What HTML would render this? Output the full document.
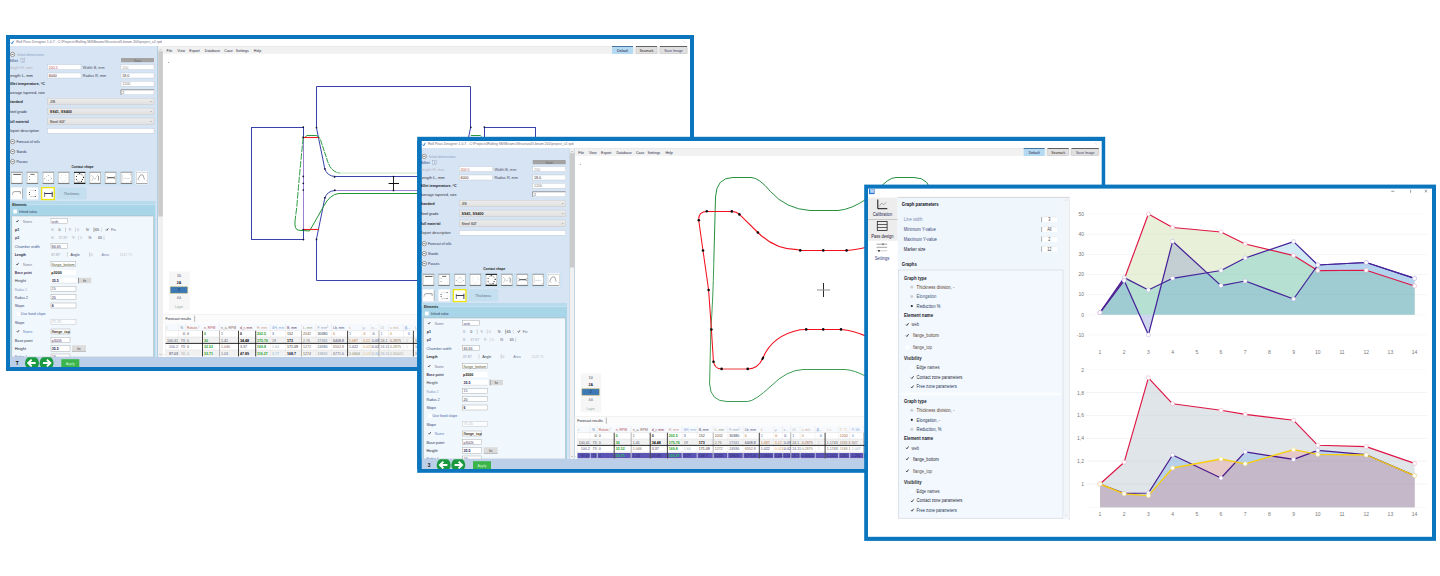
<!DOCTYPE html>
<html><head><meta charset="utf-8"><title>Roll pass design software</title>
<style>
html,body{margin:0;padding:0;background:#fff;}
body{width:1440px;height:576px;overflow:hidden;font-family:"Liberation Sans",sans-serif;}
svg{display:block;font-family:"Liberation Sans",sans-serif;}
</style></head><body>
<svg width="1440" height="576" viewBox="0 0 1440 576">
<defs><linearGradient id="cg" x1="0" y1="0" x2="0" y2="1"><stop offset="0" stop-color="#ededed"/><stop offset="1" stop-color="#e0e0e0"/></linearGradient><clipPath id="botclip"><rect x="10" y="357.2" width="680" height="9.8"/></clipPath><clipPath id="w2clip"><rect x="421" y="141" width="680" height="328"/></clipPath></defs>
<rect x="6.00" y="35.00" width="688.00" height="336.00" fill="#0b75be" />
<rect x="163.00" y="46.00" width="527.00" height="311.00" fill="#fff" />
<rect x="10.00" y="39.00" width="680.00" height="7.20" fill="#fff" />
<path d="M11 42.5 L12 43.8 L13.6 40.8" stroke="#1f6fd0" stroke-width="0.9" fill="none" />
<text font-size="3.53" fill="#3a3a55" x="16.30" y="43.44" opacity="0.75" textLength="145.5" lengthAdjust="spacing">Roll Pass Designer 1.0.7 - C:\Projects\Rolling Mill\Beams\Structural\I-beam 200\project_v2.rpd</text>
<line x1="683.00" y1="40.50" x2="685.50" y2="43.00" stroke="#bbb" stroke-width="0.4" />
<rect x="163.00" y="46.60" width="525.00" height="7.20" fill="#f1f1f1" />
<line x1="163.00" y1="46.40" x2="612.00" y2="46.40" stroke="#d4d4d4" stroke-width="0.5" />
<text font-size="4.17" fill="#2a2a45" transform="translate(166.60,51.66) scale(0.86,1)" >File</text>
<text font-size="4.17" fill="#2a2a45" transform="translate(177.30,51.66) scale(0.86,1)" >View</text>
<text font-size="4.17" fill="#2a2a45" transform="translate(189.30,51.66) scale(0.86,1)" >Export</text>
<text font-size="4.17" fill="#2a2a45" transform="translate(204.80,51.66) scale(0.86,1)" >Database</text>
<text font-size="4.17" fill="#2a2a45" transform="translate(224.30,51.66) scale(0.86,1)" >Case</text>
<text font-size="4.17" fill="#2a2a45" transform="translate(235.80,51.66) scale(0.86,1)" >Settings</text>
<text font-size="4.17" fill="#2a2a45" transform="translate(253.80,51.66) scale(0.86,1)" >Help</text>
<rect x="612.00" y="46.20" width="21.00" height="7.80" fill="#b4daf3" />
<line x1="612.00" y1="46.50" x2="633.00" y2="46.50" stroke="#2a5a8a" stroke-width="0.8" />
<text font-size="4.07" fill="#213" transform="translate(622.50,51.82) scale(0.86,1)" text-anchor="middle" >Default</text>
<rect x="636.00" y="46.20" width="21.00" height="7.40" fill="#e0e0e0" stroke="#b8b8b8" stroke-width="0.4" />
<line x1="636.00" y1="46.50" x2="657.00" y2="46.50" stroke="#444" stroke-width="0.8" />
<text font-size="4.07" fill="#322" transform="translate(646.50,51.82) scale(0.86,1)" text-anchor="middle" >Seamark</text>
<rect x="660.00" y="46.20" width="27.00" height="7.40" fill="#e0e0e0" stroke="#b8b8b8" stroke-width="0.4" />
<line x1="660.00" y1="46.50" x2="687.00" y2="46.50" stroke="#444" stroke-width="0.8" />
<text font-size="4.07" fill="#446" transform="translate(673.50,51.82) scale(0.86,1)" text-anchor="middle" >Save Image</text>
<circle cx="168.60" cy="62.40" r="0.45" fill="#333"/>
<rect x="169.00" y="271.60" width="20.60" height="38.60" fill="#f6f6f6" />
<text font-size="4.07" fill="#335" transform="translate(179.00,277.02) scale(0.86,1)" text-anchor="middle" >10</text>
<text font-size="4.07" fill="#223" transform="translate(179.00,284.22) scale(0.86,1)" font-weight="bold" text-anchor="middle" >2A</text>
<rect x="170.20" y="286.80" width="17.40" height="6.40" fill="#3c78b4" stroke="#c9b46a" stroke-width="0.5" />
<text font-size="4.07" fill="#123" transform="translate(179.00,291.42) scale(0.86,1)" text-anchor="middle" >2</text>
<text font-size="4.07" fill="#99a" transform="translate(179.00,298.62) scale(0.86,1)" text-anchor="middle" >AA</text>
<text font-size="3.85" fill="#9aa" transform="translate(179.00,308.35) scale(0.86,1)" text-anchor="middle" >Layer</text>
<line x1="163.00" y1="314.60" x2="690.00" y2="314.60" stroke="#e6e6e6" stroke-width="0.6" />
<rect x="163.00" y="315.00" width="527.00" height="8.40" fill="#fbfbfb" />
<text font-size="4.17" fill="#223" transform="translate(165.60,320.06) scale(0.86,1)" >Forecast results</text>
<line x1="194.60" y1="315.60" x2="194.60" y2="321.80" stroke="#777" stroke-width="0.5" />
<rect x="165.60" y="323.60" width="524.40" height="7.00" fill="#f6f9fd" />
<rect x="165.60" y="330.60" width="524.40" height="6.40" fill="#fff" />
<rect x="165.60" y="337.00" width="524.40" height="6.30" fill="#f1f1f1" />
<rect x="165.60" y="343.80" width="524.40" height="6.20" fill="#fff" />
<rect x="165.60" y="350.00" width="524.40" height="6.50" fill="#f1f1f1" />
<line x1="165.60" y1="323.60" x2="165.60" y2="356.50" stroke="#e2e2e2" stroke-width="0.4" />
<line x1="178.50" y1="323.60" x2="178.50" y2="356.50" stroke="#e2e2e2" stroke-width="0.4" />
<line x1="185.50" y1="323.60" x2="185.50" y2="356.50" stroke="#e2e2e2" stroke-width="0.4" />
<line x1="219.50" y1="323.60" x2="219.50" y2="356.50" stroke="#e2e2e2" stroke-width="0.4" />
<line x1="219.50" y1="330.60" x2="219.50" y2="356.50" stroke="#777" stroke-width="0.5" />
<line x1="270.50" y1="323.60" x2="270.50" y2="356.50" stroke="#e2e2e2" stroke-width="0.4" />
<line x1="285.50" y1="323.60" x2="285.50" y2="356.50" stroke="#e2e2e2" stroke-width="0.4" />
<line x1="301.50" y1="323.60" x2="301.50" y2="356.50" stroke="#e2e2e2" stroke-width="0.4" />
<line x1="301.50" y1="330.60" x2="301.50" y2="356.50" stroke="#777" stroke-width="0.5" />
<line x1="316.00" y1="323.60" x2="316.00" y2="356.50" stroke="#e2e2e2" stroke-width="0.4" />
<line x1="331.50" y1="323.60" x2="331.50" y2="356.50" stroke="#e2e2e2" stroke-width="0.4" />
<line x1="362.00" y1="323.60" x2="362.00" y2="356.50" stroke="#e2e2e2" stroke-width="0.4" />
<line x1="371.00" y1="323.60" x2="371.00" y2="356.50" stroke="#e2e2e2" stroke-width="0.4" />
<line x1="379.00" y1="323.60" x2="379.00" y2="356.50" stroke="#e2e2e2" stroke-width="0.4" />
<line x1="379.00" y1="330.60" x2="379.00" y2="356.50" stroke="#777" stroke-width="0.5" />
<line x1="388.50" y1="323.60" x2="388.50" y2="356.50" stroke="#e2e2e2" stroke-width="0.4" />
<line x1="403.50" y1="323.60" x2="403.50" y2="356.50" stroke="#e2e2e2" stroke-width="0.4" />
<line x1="427.00" y1="323.60" x2="427.00" y2="356.50" stroke="#e2e2e2" stroke-width="0.4" />
<line x1="438.00" y1="323.60" x2="438.00" y2="356.50" stroke="#e2e2e2" stroke-width="0.4" />
<line x1="452.00" y1="323.60" x2="452.00" y2="356.50" stroke="#e2e2e2" stroke-width="0.4" />
<line x1="452.00" y1="330.60" x2="452.00" y2="356.50" stroke="#777" stroke-width="0.5" />
<line x1="464.00" y1="323.60" x2="464.00" y2="356.50" stroke="#e2e2e2" stroke-width="0.4" />
<line x1="490.00" y1="323.60" x2="490.00" y2="356.50" stroke="#e2e2e2" stroke-width="0.4" />
<line x1="505.00" y1="323.60" x2="505.00" y2="356.50" stroke="#e2e2e2" stroke-width="0.4" />
<line x1="520.00" y1="323.60" x2="520.00" y2="356.50" stroke="#e2e2e2" stroke-width="0.4" />
<line x1="520.00" y1="330.60" x2="520.00" y2="356.50" stroke="#777" stroke-width="0.5" />
<line x1="535.00" y1="323.60" x2="535.00" y2="356.50" stroke="#e2e2e2" stroke-width="0.4" />
<line x1="565.00" y1="323.60" x2="565.00" y2="356.50" stroke="#e2e2e2" stroke-width="0.4" />
<line x1="580.00" y1="323.60" x2="580.00" y2="356.50" stroke="#e2e2e2" stroke-width="0.4" />
<line x1="600.00" y1="323.60" x2="600.00" y2="356.50" stroke="#e2e2e2" stroke-width="0.4" />
<line x1="600.00" y1="330.60" x2="600.00" y2="356.50" stroke="#777" stroke-width="0.5" />
<line x1="640.00" y1="323.60" x2="640.00" y2="356.50" stroke="#e2e2e2" stroke-width="0.4" />
<line x1="660.00" y1="323.60" x2="660.00" y2="356.50" stroke="#e2e2e2" stroke-width="0.4" />
<line x1="680.00" y1="323.60" x2="680.00" y2="356.50" stroke="#e2e2e2" stroke-width="0.4" />
<line x1="165.60" y1="330.60" x2="690.00" y2="330.60" stroke="#d5d5d5" stroke-width="0.4" />
<line x1="165.60" y1="337.00" x2="690.00" y2="337.00" stroke="#d5d5d5" stroke-width="0.4" />
<line x1="165.60" y1="350.00" x2="690.00" y2="350.00" stroke="#d5d5d5" stroke-width="0.4" />
<line x1="202.50" y1="330.80" x2="202.50" y2="356.40" stroke="#111" stroke-width="0.8" />
<line x1="238.50" y1="330.80" x2="238.50" y2="356.40" stroke="#111" stroke-width="0.8" />
<line x1="255.70" y1="330.80" x2="255.70" y2="356.40" stroke="#111" stroke-width="0.8" />
<line x1="347.60" y1="330.80" x2="347.60" y2="356.40" stroke="#111" stroke-width="0.8" />
<line x1="413.40" y1="330.80" x2="413.40" y2="356.40" stroke="#111" stroke-width="0.8" />
<line x1="476.00" y1="330.80" x2="476.00" y2="356.40" stroke="#111" stroke-width="0.8" />
<line x1="550.00" y1="330.80" x2="550.00" y2="356.40" stroke="#111" stroke-width="0.8" />
<line x1="620.00" y1="330.80" x2="620.00" y2="356.40" stroke="#111" stroke-width="0.8" />
<line x1="165.60" y1="343.40" x2="690.00" y2="343.40" stroke="#111" stroke-width="0.9" />
<text font-size="3.96" fill="#7ab" transform="translate(166.50,328.59) scale(0.86,1)" >i</text>
<text font-size="3.96" fill="#68a" transform="translate(180.50,328.59) scale(0.86,1)" >N</text>
<text font-size="3.96" fill="#b65" transform="translate(187.00,328.59) scale(0.86,1)" >Rotate,°</text>
<text font-size="3.96" fill="#b56" transform="translate(204.00,328.59) scale(0.86,1)" >n, RPM</text>
<text font-size="3.96" fill="#865" transform="translate(221.00,328.59) scale(0.86,1)" >n_a, RPM</text>
<text font-size="3.96" fill="#834" transform="translate(240.00,328.59) scale(0.86,1)" >d_r, mm</text>
<text font-size="3.96" fill="#c98" transform="translate(257.00,328.59) scale(0.86,1)" >H, mm</text>
<text font-size="3.96" fill="#8ad" transform="translate(272.00,328.59) scale(0.86,1)" >ΔH, mm</text>
<text font-size="3.96" fill="#546" transform="translate(287.00,328.59) scale(0.86,1)" >B, mm</text>
<text font-size="3.96" fill="#997" transform="translate(303.00,328.59) scale(0.86,1)" >L, mm</text>
<text font-size="3.96" fill="#9ab" transform="translate(317.50,328.59) scale(0.86,1)" >F, mm²</text>
<text font-size="3.96" fill="#558" transform="translate(333.00,328.59) scale(0.86,1)" >Lb, mm</text>
<text font-size="3.96" fill="#da8" transform="translate(349.00,328.59) scale(0.86,1)" >λ</text>
<text font-size="3.96" fill="#aab" transform="translate(363.00,328.59) scale(0.86,1)" >μ</text>
<text font-size="3.96" fill="#aab" transform="translate(372.00,328.59) scale(0.86,1)" >ε, -</text>
<text font-size="3.96" fill="#bbb" transform="translate(380.50,328.59) scale(0.86,1)" >λΣ</text>
<text font-size="3.96" fill="#ca8" transform="translate(390.00,328.59) scale(0.86,1)" >v, m/s</text>
<text font-size="3.96" fill="#47c" transform="translate(405.00,328.59) scale(0.86,1)" >β, -</text>
<text font-size="3.96" fill="#da8" transform="translate(415.00,328.59) scale(0.86,1)" >t, s</text>
<text font-size="3.96" fill="#db8" transform="translate(428.00,328.59) scale(0.86,1)" >T, °C</text>
<text font-size="3.96" fill="#8ad" transform="translate(440.00,328.59) scale(0.86,1)" >P, kN</text>
<text font-size="4.17" fill="#999" transform="translate(178.00,335.26) scale(0.86,1)" text-anchor="end" ></text>
<text font-size="4.17" fill="#333" transform="translate(184.80,335.26) scale(0.86,1)" text-anchor="end" >0</text>
<text font-size="4.17" fill="#444" transform="translate(187.00,335.26) scale(0.86,1)" >0</text>
<text font-size="4.17" fill="#1fa21f" transform="translate(204.00,335.26) scale(0.86,1)" font-weight="bold" >0</text>
<text font-size="4.17" fill="#555" transform="translate(221.00,335.26) scale(0.86,1)" >1</text>
<text font-size="4.17" fill="#111" transform="translate(240.00,335.26) scale(0.86,1)" font-weight="bold" >0</text>
<text font-size="4.17" fill="#1fa21f" transform="translate(257.00,335.26) scale(0.86,1)" font-weight="bold" >202.5</text>
<text font-size="4.17" fill="#35a" transform="translate(272.00,335.26) scale(0.86,1)" >3</text>
<text font-size="4.17" fill="#432" transform="translate(287.00,335.26) scale(0.86,1)" >152</text>
<text font-size="4.17" fill="#753" transform="translate(303.00,335.26) scale(0.86,1)" >2032</text>
<text font-size="4.17" fill="#235" transform="translate(317.50,335.26) scale(0.86,1)" >30380</text>
<text font-size="4.17" fill="#b73" transform="translate(333.00,335.26) scale(0.86,1)" >6</text>
<text font-size="4.17" fill="#47c" transform="translate(349.00,335.26) scale(0.86,1)" >1</text>
<text font-size="4.17" fill="#b62" transform="translate(363.50,335.26) scale(0.86,1)" >0</text>
<text font-size="4.17" fill="#238" transform="translate(372.50,335.26) scale(0.86,1)" >0</text>
<text font-size="4.17" fill="#47c" transform="translate(380.50,335.26) scale(0.86,1)" >1</text>
<text font-size="4.17" fill="#b83" transform="translate(390.00,335.26) scale(0.86,1)" >0</text>
<text font-size="4.17" fill="#36b" transform="translate(408.00,335.26) scale(0.86,1)" >0</text>
<text font-size="4.17" fill="#a63" transform="translate(428.00,335.26) scale(0.86,1)" >1200</text>
<text font-size="4.17" fill="#58c" transform="translate(440.00,335.26) scale(0.86,1)" >0</text>
<text font-size="4.17" fill="#556" transform="translate(178.00,341.66) scale(0.86,1)" text-anchor="end" >100.41</text>
<text font-size="4.17" fill="#557" transform="translate(184.80,341.66) scale(0.86,1)" text-anchor="end" >73</text>
<text font-size="4.17" fill="#666" transform="translate(187.00,341.66) scale(0.86,1)" >0</text>
<text font-size="4.17" fill="#1fa21f" transform="translate(204.00,341.66) scale(0.86,1)" font-weight="bold" >30</text>
<text font-size="4.17" fill="#446" transform="translate(221.00,341.66) scale(0.86,1)" >1.41</text>
<text font-size="4.17" fill="#000" transform="translate(240.00,341.66) scale(0.86,1)" font-weight="bold" >34.48</text>
<text font-size="4.17" fill="#1fa21f" transform="translate(257.00,341.66) scale(0.86,1)" font-weight="bold" >175.76</text>
<text font-size="4.17" fill="#667" transform="translate(272.00,341.66) scale(0.86,1)" >19</text>
<text font-size="4.17" fill="#211" transform="translate(287.00,341.66) scale(0.86,1)" font-weight="bold" >173</text>
<text font-size="4.17" fill="#876" transform="translate(303.00,341.66) scale(0.86,1)" >2.76</text>
<text font-size="4.17" fill="#679" transform="translate(317.50,341.66) scale(0.86,1)" >27341</text>
<text font-size="4.17" fill="#446" transform="translate(333.00,341.66) scale(0.86,1)" >6408.8</text>
<text font-size="4.17" fill="#b73" transform="translate(349.00,341.66) scale(0.86,1)" >1.087</text>
<text font-size="4.17" fill="#c84" transform="translate(363.00,341.66) scale(0.86,1)" >3.22</text>
<text font-size="4.17" fill="#458" transform="translate(372.00,341.66) scale(0.86,1)" >0.09</text>
<text font-size="4.17" fill="#666" transform="translate(380.50,341.66) scale(0.86,1)" >24.1</text>
<text font-size="4.17" fill="#964" transform="translate(390.00,341.66) scale(0.86,1)" >0.2875</text>
<text font-size="4.17" fill="#bbb" transform="translate(406.00,341.66) scale(0.86,1)" >1</text>
<text font-size="4.17" fill="#666" transform="translate(415.00,341.66) scale(0.86,1)" >1.1743</text>
<text font-size="4.17" fill="#975" transform="translate(428.00,341.66) scale(0.86,1)" >1192.5</text>
<text font-size="4.17" fill="#977" transform="translate(440.00,341.66) scale(0.86,1)" >847</text>
<text font-size="4.17" fill="#558" transform="translate(178.00,348.36) scale(0.86,1)" text-anchor="end" >100.2</text>
<text font-size="4.17" fill="#446" transform="translate(184.80,348.36) scale(0.86,1)" text-anchor="end" >73</text>
<text font-size="4.17" fill="#444" transform="translate(187.00,348.36) scale(0.86,1)" >0</text>
<text font-size="4.17" fill="#1fa21f" transform="translate(204.00,348.36) scale(0.86,1)" font-weight="bold" >32.52</text>
<text font-size="4.17" fill="#865" transform="translate(221.00,348.36) scale(0.86,1)" >1.046</text>
<text font-size="4.17" fill="#446" transform="translate(240.00,348.36) scale(0.86,1)" >3.37</text>
<text font-size="4.17" fill="#1fa21f" transform="translate(257.00,348.36) scale(0.86,1)" font-weight="bold" >169.8</text>
<text font-size="4.17" fill="#9ab" transform="translate(272.00,348.36) scale(0.86,1)" >1.64</text>
<text font-size="4.17" fill="#322" transform="translate(287.00,348.36) scale(0.86,1)" >171.09</text>
<text font-size="4.17" fill="#765" transform="translate(303.00,348.36) scale(0.86,1)" >1272</text>
<text font-size="4.17" fill="#457" transform="translate(317.50,348.36) scale(0.86,1)" >24590</text>
<text font-size="4.17" fill="#865" transform="translate(333.00,348.36) scale(0.86,1)" >6552.8</text>
<text font-size="4.17" fill="#446" transform="translate(349.00,348.36) scale(0.86,1)" >1.022</text>
<text font-size="4.17" fill="#c95" transform="translate(363.00,348.36) scale(0.86,1)" >0.021</text>
<text font-size="4.17" fill="#446" transform="translate(372.00,348.36) scale(0.86,1)" >0.02</text>
<text font-size="4.17" fill="#568" transform="translate(380.50,348.36) scale(0.86,1)" >24.11</text>
<text font-size="4.17" fill="#875" transform="translate(390.00,348.36) scale(0.86,1)" >0.2875</text>
<text font-size="4.17" fill="#ccc" transform="translate(406.00,348.36) scale(0.86,1)" >1</text>
<text font-size="4.17" fill="#555" transform="translate(415.00,348.36) scale(0.86,1)" >1.1743</text>
<text font-size="4.17" fill="#986" transform="translate(428.00,348.36) scale(0.86,1)" >1188.1</text>
<text font-size="4.17" fill="#9ab" transform="translate(440.00,348.36) scale(0.86,1)" >1.047</text>
<text font-size="4.17" fill="#335" transform="translate(178.00,354.76) scale(0.86,1)" text-anchor="end" >97.03</text>
<text font-size="4.17" fill="#99a" transform="translate(184.80,354.76) scale(0.86,1)" text-anchor="end" >74</text>
<text font-size="4.17" fill="#aaa" transform="translate(187.00,354.76) scale(0.86,1)" >0</text>
<text font-size="4.17" fill="#1fa21f" transform="translate(204.00,354.76) scale(0.86,1)" font-weight="bold" >33.71</text>
<text font-size="4.17" fill="#568" transform="translate(221.00,354.76) scale(0.86,1)" >1.03</text>
<text font-size="4.17" fill="#112" transform="translate(240.00,354.76) scale(0.86,1)" font-weight="bold" >47.89</text>
<text font-size="4.17" fill="#1fa21f" transform="translate(257.00,354.76) scale(0.86,1)" font-weight="bold" >116.27</text>
<text font-size="4.17" fill="#8bd" transform="translate(272.00,354.76) scale(0.86,1)" >3.77</text>
<text font-size="4.17" fill="#113" transform="translate(287.00,354.76) scale(0.86,1)" font-weight="bold" >168.7</text>
<text font-size="4.17" fill="#765" transform="translate(303.00,354.76) scale(0.86,1)" >1274</text>
<text font-size="4.17" fill="#89a" transform="translate(317.50,354.76) scale(0.86,1)" >19825</text>
<text font-size="4.17" fill="#668" transform="translate(333.00,354.76) scale(0.86,1)" >6771.6</text>
<text font-size="4.17" fill="#886" transform="translate(349.00,354.76) scale(0.86,1)" >1.0664</text>
<text font-size="4.17" fill="#dc9" transform="translate(363.00,354.76) scale(0.86,1)" >0.032</text>
<text font-size="4.17" fill="#8ac" transform="translate(372.00,354.76) scale(0.86,1)" >0.16</text>
<text font-size="4.17" fill="#9ab" transform="translate(380.50,354.76) scale(0.86,1)" >26.11</text>
<text font-size="4.17" fill="#aa9" transform="translate(390.00,354.76) scale(0.86,1)" >0.30022</text>
<text font-size="4.17" fill="#777" transform="translate(415.00,354.76) scale(0.86,1)" >1.2411</text>
<text font-size="4.17" fill="#986" transform="translate(428.00,354.76) scale(0.86,1)" >1180</text>
<text font-size="4.17" fill="#9ab" transform="translate(440.00,354.76) scale(0.86,1)" >1.281</text>
<path d="M163.5 354 L164.5 355.2" stroke="#999" stroke-width="0.4" fill="none" />
<rect x="10.00" y="46.00" width="147.50" height="311.00" fill="#d6e4f4" />
<rect x="157.50" y="46.00" width="5.50" height="311.00" fill="#f0f0f0" />
<rect x="158.20" y="51.20" width="4.70" height="165.30" fill="#cbcbcb" />
<path d="M159.2 50.3 L160.4 49 L161.6 50.3" stroke="#888" stroke-width="0.4" fill="none" />
<path d="M159.2 353.8 L160.4 355 L161.6 353.8" stroke="#888" stroke-width="0.4" fill="none" />
<circle cx="12.50" cy="54.40" r="2.15" fill="#fff" stroke="#444" stroke-width="0.5"/>
<line x1="11.40" y1="54.40" x2="13.60" y2="54.40" stroke="#222" stroke-width="0.6" />
<text font-size="4.28" fill="#8fa3c4" x="17.40" y="56.10" textLength="26.70" lengthAdjust="spacingAndGlyphs" >Initial dimensions</text>
<text font-size="4.28" fill="#2b4a8a" x="8.30" y="62.20" textLength="9.70" lengthAdjust="spacingAndGlyphs" >Billet</text>
<rect x="21.00" y="58.60" width="3.80" height="4.00" fill="#e6eefa" stroke="#8aa0c0" stroke-width="0.4" />
<text font-size="3.64" fill="#557" transform="translate(22.00,61.97) scale(0.86,1)" >1</text>
<rect x="121.00" y="58.00" width="33.00" height="4.20" fill="#a3a3a3" />
<text font-size="3.85" fill="#666" transform="translate(137.50,61.55) scale(0.86,1)" text-anchor="middle" >Save</text>
<text font-size="4.28" fill="#b4b4bc" x="8.00" y="68.70" textLength="24.70" lengthAdjust="spacingAndGlyphs" >Height H, mm</text>
<rect x="47.50" y="64.60" width="33.50" height="5.00" fill="#fff" stroke="#b9c3d3" stroke-width="0.4" />
<text font-size="4.28" fill="#b55" transform="translate(48.70,68.70) scale(0.86,1)" >200.5</text>
<text font-size="4.28" fill="#556" x="82.80" y="68.70" textLength="21.90" lengthAdjust="spacingAndGlyphs" >Width B, mm</text>
<rect x="121.00" y="64.60" width="33.00" height="5.00" fill="#fff" stroke="#b9c3d3" stroke-width="0.4" />
<text font-size="4.28" fill="#999" transform="translate(122.20,68.70) scale(0.86,1)" >150</text>
<text font-size="4.28" fill="#334" x="8.00" y="77.20" textLength="25.00" lengthAdjust="spacingAndGlyphs" >Length L, mm</text>
<rect x="47.50" y="73.00" width="33.50" height="5.00" fill="#fff" stroke="#b9c3d3" stroke-width="0.4" />
<text font-size="4.28" fill="#522" transform="translate(48.70,77.10) scale(0.86,1)" >6000</text>
<text font-size="4.28" fill="#445" x="82.80" y="77.20" textLength="23.20" lengthAdjust="spacingAndGlyphs" >Radius R, mm</text>
<rect x="121.00" y="73.00" width="33.00" height="5.00" fill="#fff" stroke="#b9c3d3" stroke-width="0.4" />
<text font-size="4.28" fill="#333" transform="translate(122.20,77.10) scale(0.86,1)" >18.0</text>
<text font-size="4.28" fill="#161a2a" x="8.00" y="85.30" textLength="36.80" lengthAdjust="spacingAndGlyphs" font-weight="bold" >Billet temperature, °C</text>
<rect x="121.00" y="81.20" width="33.00" height="5.00" fill="#fff" stroke="#b9c3d3" stroke-width="0.4" />
<text font-size="4.28" fill="#777" transform="translate(122.20,85.30) scale(0.86,1)" >1200</text>
<text font-size="4.28" fill="#334" x="8.00" y="94.10" textLength="36.80" lengthAdjust="spacingAndGlyphs" >Average tapered, rate</text>
<rect x="121.00" y="89.80" width="33.00" height="5.00" fill="#fff" stroke="#b9c3d3" stroke-width="0.4" />
<line x1="121.00" y1="89.80" x2="154.00" y2="89.80" stroke="#555" stroke-width="0.5" />
<line x1="121.00" y1="89.80" x2="121.00" y2="94.80" stroke="#555" stroke-width="0.5" />
<text font-size="4.28" fill="#555" transform="translate(122.20,93.90) scale(0.86,1)" >2</text>
<text font-size="4.28" fill="#222" x="8.00" y="103.10" textLength="14.90" lengthAdjust="spacingAndGlyphs" font-weight="bold" >Standard</text>
<rect x="47.5" y="98.2" width="106.5" height="6.6" fill="url(#cg)" stroke="#c2c2c2" stroke-width="0.4"/>
<text font-size="4.28" fill="#222" transform="translate(49.80,103.10) scale(0.86,1)" >JIS</text>
<path d="M150.2 101.10000000000001 L151 102.0 L151.8 101.10000000000001" stroke="#777" stroke-width="0.4" fill="none" />
<text font-size="4.28" fill="#223" x="8.00" y="113.10" textLength="18.75" lengthAdjust="spacingAndGlyphs" >Steel grade</text>
<rect x="47.5" y="108.1" width="106.5" height="6.6" fill="url(#cg)" stroke="#c2c2c2" stroke-width="0.4"/>
<text font-size="4.28" fill="#222" transform="translate(49.80,113.00) scale(0.86,1)" font-weight="bold" >SS41, SS400</text>
<path d="M150.2 111.0 L151 111.89999999999999 L151.8 111.0" stroke="#777" stroke-width="0.4" fill="none" />
<text font-size="4.28" fill="#223" x="8.00" y="123.10" textLength="20.80" lengthAdjust="spacingAndGlyphs" font-weight="bold" >Roll material</text>
<rect x="47.5" y="118" width="106.5" height="6.6" fill="url(#cg)" stroke="#c2c2c2" stroke-width="0.4"/>
<text font-size="4.28" fill="#222" transform="translate(49.80,122.90) scale(0.86,1)" >Steel 60Г</text>
<path d="M150.2 120.9 L151 121.8 L151.8 120.9" stroke="#777" stroke-width="0.4" fill="none" />
<text font-size="4.28" fill="#334" x="8.00" y="132.30" textLength="30.90" lengthAdjust="spacingAndGlyphs" >Report description</text>
<rect x="47.50" y="128.50" width="106.50" height="4.70" fill="#fff" stroke="#b9c3d3" stroke-width="0.4" />
<circle cx="12.60" cy="141.60" r="2.15" fill="#fff" stroke="#444" stroke-width="0.5"/>
<line x1="11.50" y1="141.60" x2="13.70" y2="141.60" stroke="#222" stroke-width="0.6" />
<text font-size="4.28" fill="#1f2f55" x="16.40" y="143.10" textLength="23.40" lengthAdjust="spacingAndGlyphs" >Forecast of rolls</text>
<circle cx="12.60" cy="151.60" r="2.15" fill="#fff" stroke="#444" stroke-width="0.5"/>
<line x1="11.50" y1="151.60" x2="13.70" y2="151.60" stroke="#222" stroke-width="0.6" />
<text font-size="4.28" fill="#1f2f55" x="16.40" y="153.10" textLength="10.20" lengthAdjust="spacingAndGlyphs" >Stands</text>
<circle cx="12.60" cy="161.60" r="2.15" fill="#fff" stroke="#444" stroke-width="0.5"/>
<line x1="11.50" y1="161.60" x2="13.70" y2="161.60" stroke="#222" stroke-width="0.6" />
<text font-size="4.28" fill="#1f2f55" x="16.40" y="163.10" textLength="11.40" lengthAdjust="spacingAndGlyphs" >Passes</text>
<text font-size="3.75" fill="#222" transform="translate(82.50,168.31) scale(0.86,1)" font-weight="bold" text-anchor="middle" >Contact shape</text>
<rect x="10.00" y="171.00" width="140.00" height="14.50" fill="#cbe2f2" />
<rect x="10.00" y="185.50" width="47.00" height="15.00" fill="#cbe2f2" />
<rect x="11.10" y="172.00" width="11.30" height="11.50" fill="#fff" />
<line x1="11.10" y1="172.30" x2="22.40" y2="172.30" stroke="#808080" stroke-width="0.8" />
<line x1="11.10" y1="183.40" x2="22.40" y2="183.40" stroke="#707070" stroke-width="1.0" />
<line x1="11.40" y1="172.00" x2="11.40" y2="183.60" stroke="#a8a8a8" stroke-width="0.6" />
<line x1="22.10" y1="172.00" x2="22.10" y2="183.60" stroke="#9c9c9c" stroke-width="0.6" />
<rect x="26.75" y="172.00" width="11.30" height="11.50" fill="#fff" />
<line x1="26.75" y1="172.30" x2="38.05" y2="172.30" stroke="#808080" stroke-width="0.8" />
<line x1="26.75" y1="183.40" x2="38.05" y2="183.40" stroke="#707070" stroke-width="1.0" />
<line x1="27.05" y1="172.00" x2="27.05" y2="183.60" stroke="#a8a8a8" stroke-width="0.6" />
<line x1="37.75" y1="172.00" x2="37.75" y2="183.60" stroke="#9c9c9c" stroke-width="0.6" />
<rect x="42.70" y="172.00" width="11.30" height="11.50" fill="#fff" />
<line x1="42.70" y1="172.30" x2="54.00" y2="172.30" stroke="#808080" stroke-width="0.8" />
<line x1="42.70" y1="183.40" x2="54.00" y2="183.40" stroke="#707070" stroke-width="1.0" />
<line x1="43.00" y1="172.00" x2="43.00" y2="183.60" stroke="#a8a8a8" stroke-width="0.6" />
<line x1="53.70" y1="172.00" x2="53.70" y2="183.60" stroke="#9c9c9c" stroke-width="0.6" />
<rect x="58.00" y="172.00" width="11.30" height="11.50" fill="#fff" />
<line x1="58.00" y1="172.30" x2="69.30" y2="172.30" stroke="#808080" stroke-width="0.8" />
<line x1="58.00" y1="183.40" x2="69.30" y2="183.40" stroke="#707070" stroke-width="1.0" />
<line x1="58.30" y1="172.00" x2="58.30" y2="183.60" stroke="#a8a8a8" stroke-width="0.6" />
<line x1="69.00" y1="172.00" x2="69.00" y2="183.60" stroke="#9c9c9c" stroke-width="0.6" />
<rect x="74.00" y="172.00" width="11.30" height="11.50" fill="#fff" />
<line x1="74.00" y1="172.30" x2="85.30" y2="172.30" stroke="#808080" stroke-width="0.8" />
<line x1="74.00" y1="183.40" x2="85.30" y2="183.40" stroke="#707070" stroke-width="1.0" />
<line x1="74.30" y1="172.00" x2="74.30" y2="183.60" stroke="#a8a8a8" stroke-width="0.6" />
<line x1="85.00" y1="172.00" x2="85.00" y2="183.60" stroke="#9c9c9c" stroke-width="0.6" />
<rect x="89.50" y="172.00" width="11.30" height="11.50" fill="#fff" />
<line x1="89.50" y1="172.30" x2="100.80" y2="172.30" stroke="#808080" stroke-width="0.8" />
<line x1="89.50" y1="183.40" x2="100.80" y2="183.40" stroke="#707070" stroke-width="1.0" />
<line x1="89.80" y1="172.00" x2="89.80" y2="183.60" stroke="#a8a8a8" stroke-width="0.6" />
<line x1="100.50" y1="172.00" x2="100.50" y2="183.60" stroke="#9c9c9c" stroke-width="0.6" />
<rect x="104.90" y="172.00" width="11.30" height="11.50" fill="#fff" />
<line x1="104.90" y1="172.30" x2="116.20" y2="172.30" stroke="#808080" stroke-width="0.8" />
<line x1="104.90" y1="183.40" x2="116.20" y2="183.40" stroke="#707070" stroke-width="1.0" />
<line x1="105.20" y1="172.00" x2="105.20" y2="183.60" stroke="#a8a8a8" stroke-width="0.6" />
<line x1="115.90" y1="172.00" x2="115.90" y2="183.60" stroke="#9c9c9c" stroke-width="0.6" />
<rect x="120.80" y="172.00" width="11.30" height="11.50" fill="#fff" />
<line x1="120.80" y1="172.30" x2="132.10" y2="172.30" stroke="#808080" stroke-width="0.8" />
<line x1="120.80" y1="183.40" x2="132.10" y2="183.40" stroke="#707070" stroke-width="1.0" />
<line x1="121.10" y1="172.00" x2="121.10" y2="183.60" stroke="#a8a8a8" stroke-width="0.6" />
<line x1="131.80" y1="172.00" x2="131.80" y2="183.60" stroke="#9c9c9c" stroke-width="0.6" />
<rect x="135.50" y="171.30" width="12.90" height="13.30" fill="#fff" />
<rect x="136.30" y="172.30" width="11.20" height="11.40" fill="#fff" stroke="#a8a8a8" stroke-width="0.4" />
<line x1="136.30" y1="183.60" x2="147.50" y2="183.60" stroke="#8a8a8a" stroke-width="0.7" />
<line x1="13.20" y1="174.40" x2="20.90" y2="174.40" stroke="#333" stroke-width="0.8" />
<line x1="30.40" y1="174.40" x2="34.60" y2="174.40" stroke="#333" stroke-width="0.7" />
<circle cx="29.40" cy="176.40" r="0.45" fill="#333"/>
<circle cx="29.40" cy="179.50" r="0.45" fill="#333"/>
<circle cx="35.60" cy="176.40" r="0.35" fill="#ccc"/>
<circle cx="35.60" cy="179.50" r="0.35" fill="#ccc"/>
<circle cx="35.20" cy="181.00" r="0.35" fill="#ccc"/>
<circle cx="48.30" cy="175.40" r="0.45" fill="#555"/>
<circle cx="44.60" cy="178.40" r="0.45" fill="#555"/>
<circle cx="51.60" cy="178.40" r="0.45" fill="#555"/>
<circle cx="48.30" cy="180.40" r="0.45" fill="#555"/>
<path d="M45.8 177.2 L47.2 176 M49.6 176 L50.8 177.2 M45.8 179.4 L47 180.2 M50.8 179.4 L49.6 180.2" stroke="#999" stroke-width="0.4" fill="none" />
<circle cx="61.30" cy="175.40" r="0.4" fill="#aaa"/>
<circle cx="65.70" cy="175.40" r="0.4" fill="#aaa"/>
<circle cx="60.40" cy="178.00" r="0.4" fill="#aaa"/>
<circle cx="66.70" cy="177.60" r="0.4" fill="#aaa"/>
<path d="M61.5 180 L63.2 181.5 M66 179.5 L64.2 181.5" stroke="#ccc" stroke-width="0.4" fill="none" />
<circle cx="76.40" cy="176.50" r="0.55" fill="#111"/>
<circle cx="76.40" cy="179.20" r="0.55" fill="#111"/>
<circle cx="83.50" cy="177.40" r="0.55" fill="#111"/>
<circle cx="82.40" cy="179.60" r="0.55" fill="#111"/>
<circle cx="81.40" cy="181.40" r="0.55" fill="#111"/>
<circle cx="79.60" cy="173.60" r="0.55" fill="#111"/>
<path d="M77.2 174.8 Q79.6 172.6 82 174.6 L83.4 176.6 M76.8 180.5 Q78 182.4 80.5 182" stroke="#555" stroke-width="0.4" fill="none" />
<line x1="74.00" y1="172.40" x2="85.30" y2="172.40" stroke="#222" stroke-width="1.0" />
<line x1="74.00" y1="183.30" x2="85.30" y2="183.30" stroke="#111" stroke-width="1.1" />
<path d="M91.5 175.3 L93.5 177.4 L92 180.4 M94 179 L96 178.4" stroke="#666" stroke-width="0.5" fill="none" stroke-dasharray="0.9 0.5"/>
<path d="M98.4 174.5 L96.4 176.7" stroke="#777" stroke-width="0.45" fill="none" />
<line x1="98.50" y1="176.00" x2="98.50" y2="180.60" stroke="#555" stroke-width="0.6" />
<path d="M107 176.3 L107.9 177.7 L107 179.2 M115 176.3 L114.1 177.7 L115 179.2" stroke="#444" stroke-width="0.55" fill="none" />
<line x1="107.80" y1="177.70" x2="114.20" y2="177.70" stroke="#444" stroke-width="1.0" />
<line x1="122.70" y1="174.50" x2="122.70" y2="181.00" stroke="#c8c8c8" stroke-width="0.5" />
<line x1="123.50" y1="178.40" x2="129.80" y2="178.40" stroke="#bbb" stroke-width="0.5" />
<circle cx="130.40" cy="174.20" r="0.4" fill="#555"/>
<circle cx="130.40" cy="181.40" r="0.4" fill="#555"/>
<path d="M140 175.5 L138 179.2 L139.2 180.6 M140 175.5 Q141 174.4 143 175 L144.5 179.6" stroke="#555" stroke-width="0.5" fill="none" />
<circle cx="146.50" cy="180.60" r="0.35" fill="#999"/>
<rect x="11.10" y="187.40" width="11.40" height="12.00" fill="#fff" />
<rect x="26.75" y="187.40" width="11.40" height="12.00" fill="#fff" />
<rect x="41.65" y="187.65" width="12.60" height="11.90" fill="#fff" stroke="#efe410" stroke-width="1.3" />
<path d="M12.6 193.6 Q12.8 191.6 14.4 191.6 H20.4 V194" stroke="#555" stroke-width="0.55" fill="none" />
<line x1="22.50" y1="188.30" x2="22.50" y2="198.70" stroke="#888" stroke-width="0.6" />
<circle cx="12.30" cy="194.20" r="0.4" fill="#555"/>
<line x1="29.50" y1="190.40" x2="35.00" y2="190.40" stroke="#c8c8c8" stroke-width="0.5" />
<line x1="29.80" y1="196.70" x2="35.00" y2="196.70" stroke="#999" stroke-width="0.5" />
<circle cx="35.40" cy="190.50" r="0.5" fill="#222"/>
<circle cx="35.40" cy="196.50" r="0.5" fill="#222"/>
<circle cx="29.40" cy="192.40" r="0.5" fill="#222"/>
<circle cx="29.40" cy="194.60" r="0.5" fill="#222"/>
<circle cx="35.50" cy="192.50" r="0.35" fill="#ccc"/>
<circle cx="35.50" cy="194.50" r="0.35" fill="#ccc"/>
<path d="M44.6 192 V197" stroke="#445" stroke-width="0.7" fill="none" />
<path d="M52.2 191.7 V197" stroke="#445" stroke-width="1.0" fill="none" />
<line x1="44.60" y1="193.50" x2="52.40" y2="193.50" stroke="#3a3f55" stroke-width="1.0" />
<rect x="57.00" y="187.20" width="29.60" height="12.30" fill="#c3dff0" />
<text font-size="4.07" fill="#5d6d80" transform="translate(71.50,195.02) scale(0.86,1)" text-anchor="middle" >Thickness</text>
<rect x="10.00" y="201.00" width="145.30" height="156.00" fill="#a9d5e8" />
<rect x="10.00" y="201.00" width="145.30" height="3.40" fill="#b7dbec" />
<text font-size="4.28" fill="#222" x="12.30" y="206.40" textLength="14.20" lengthAdjust="spacingAndGlyphs" font-weight="bold" >Elements</text>
<line x1="27.50" y1="204.70" x2="155.00" y2="204.70" stroke="#cfe8f3" stroke-width="0.7" />
<rect x="13.30" y="209.60" width="3.60" height="3.80" fill="#fff" />
<text font-size="4.28" fill="#2a3a5a" x="19.00" y="213.20" textLength="18.00" lengthAdjust="spacingAndGlyphs" >Infeed value</text>
<rect x="11.80" y="216.00" width="141.90" height="141.00" fill="#f0f7fd" stroke="#a9b0b8" stroke-width="0.5" />
<path d="M16.3 221.2 L17.1 222.1 L18.6 220.0" stroke="#111" stroke-width="0.65" fill="none" />
<text font-size="4.28" fill="#7a8191" x="23.10" y="223.10" textLength="8.90" lengthAdjust="spacingAndGlyphs" >Name</text>
<rect x="51.00" y="218.60" width="16.50" height="5.00" fill="#fff" stroke="#9a9a9a" stroke-width="0.4" />
<text font-size="4.17" fill="#558" transform="translate(51.80,222.66) scale(0.86,1)" >web</text>
<text font-size="4.28" fill="#223" transform="translate(15.00,231.30) scale(0.86,1)" font-weight="bold" >p1</text>
<text font-size="4.17" fill="#99a" transform="translate(51.00,231.26) scale(0.86,1)" >X:</text>
<text font-size="4.17" fill="#334" transform="translate(58.60,231.26) scale(0.86,1)" >0</text>
<line x1="65.50" y1="227.50" x2="65.50" y2="232.00" stroke="#999" stroke-width="0.4" />
<text font-size="4.17" fill="#889" transform="translate(68.50,231.26) scale(0.86,1)" >Y:</text>
<line x1="75.50" y1="227.50" x2="75.50" y2="232.00" stroke="#aaa" stroke-width="0.4" />
<text font-size="4.17" fill="#aab" transform="translate(77.00,231.26) scale(0.86,1)" >0</text>
<text font-size="4.17" fill="#556" transform="translate(86.00,231.26) scale(0.86,1)" >N:</text>
<line x1="94.00" y1="227.50" x2="94.00" y2="232.00" stroke="#555" stroke-width="0.5" />
<text font-size="4.17" fill="#333" transform="translate(95.00,231.26) scale(0.86,1)" >65</text>
<line x1="101.50" y1="227.50" x2="101.50" y2="232.00" stroke="#bbb" stroke-width="0.4" />
<path d="M106 229.5 L106.8 230.4 L108.3 228.3" stroke="#111" stroke-width="0.65" fill="none" />
<text font-size="4.17" fill="#667" transform="translate(111.00,231.26) scale(0.86,1)" >Fix</text>
<text font-size="4.28" fill="#446" transform="translate(15.00,239.40) scale(0.86,1)" font-weight="bold" >p2</text>
<text font-size="4.17" fill="#99a" transform="translate(51.00,239.36) scale(0.86,1)" >X:</text>
<text font-size="4.17" fill="#aab" transform="translate(58.60,239.36) scale(0.86,1)" >37.87</text>
<text font-size="4.17" fill="#889" transform="translate(72.00,239.36) scale(0.86,1)" >Y:</text>
<line x1="78.50" y1="235.50" x2="78.50" y2="240.00" stroke="#bbb" stroke-width="0.4" />
<text font-size="4.17" fill="#bbc" transform="translate(80.00,239.36) scale(0.86,1)" >0</text>
<text font-size="4.17" fill="#667" transform="translate(88.50,239.36) scale(0.86,1)" >N:</text>
<text font-size="4.17" fill="#445" transform="translate(98.00,239.36) scale(0.86,1)" >65</text>
<line x1="104.00" y1="235.50" x2="104.00" y2="240.00" stroke="#aaa" stroke-width="0.4" />
<text font-size="4.28" fill="#46598a" x="14.80" y="247.90" textLength="25.00" lengthAdjust="spacingAndGlyphs" >Chamber width</text>
<rect x="51.00" y="243.60" width="16.50" height="5.00" fill="#fff" stroke="#9a9a9a" stroke-width="0.4" />
<text font-size="4.17" fill="#335" transform="translate(51.80,247.66) scale(0.86,1)" >84.65</text>
<text font-size="4.28" fill="#223" x="14.80" y="256.00" textLength="11.00" lengthAdjust="spacingAndGlyphs" font-weight="bold" >Length</text>
<text font-size="4.17" fill="#99a" transform="translate(51.00,255.96) scale(0.86,1)" >37.87</text>
<line x1="67.30" y1="252.00" x2="67.30" y2="256.80" stroke="#aaa" stroke-width="0.4" />
<text font-size="4.17" fill="#445" transform="translate(70.50,255.96) scale(0.86,1)" >Angle</text>
<line x1="89.50" y1="252.00" x2="89.50" y2="256.80" stroke="#999" stroke-width="0.4" />
<text font-size="4.17" fill="#aab" transform="translate(90.60,255.96) scale(0.86,1)" >0</text>
<text font-size="4.17" fill="#7a86a8" transform="translate(101.50,255.96) scale(0.86,1)" >Area</text>
<text font-size="4.17" fill="#c3c8d0" transform="translate(119.50,255.96) scale(0.86,1)" >1147.71</text>
<path d="M16.3 264.1 L17.1 265.0 L18.6 262.90000000000003" stroke="#111" stroke-width="0.65" fill="none" />
<text font-size="4.28" fill="#7a8191" x="23.10" y="266.00" textLength="8.90" lengthAdjust="spacingAndGlyphs" >Name</text>
<rect x="51.00" y="261.60" width="24.80" height="5.00" fill="#fff" stroke="#9a9a9a" stroke-width="0.4" />
<text font-size="4.17" fill="#553" transform="translate(51.80,265.66) scale(0.86,1)" >flange_bottom</text>
<text font-size="4.28" fill="#4a3a5a" x="14.80" y="274.10" textLength="17.20" lengthAdjust="spacingAndGlyphs" font-weight="bold" >Base point</text>
<rect x="51.00" y="270.00" width="24.80" height="5.00" fill="#fff" />
<text font-size="4.28" fill="#111" transform="translate(51.30,274.10) scale(0.86,1)" font-weight="bold" >p3000</text>
<text font-size="4.28" fill="#334" x="14.80" y="282.10" textLength="11.20" lengthAdjust="spacingAndGlyphs" >Height</text>
<rect x="51.00" y="278.00" width="25.40" height="5.20" fill="#fff" />
<line x1="51.00" y1="283.20" x2="76.40" y2="283.20" stroke="#c5c5c5" stroke-width="0.4" />
<text font-size="4.17" fill="#225" transform="translate(51.80,282.16) scale(0.86,1)" font-weight="bold" >35.5</text>
<rect x="78.50" y="277.80" width="12.80" height="5.40" fill="#d9d9d9" />
<line x1="78.50" y1="277.60" x2="78.50" y2="283.40" stroke="#666" stroke-width="0.6" />
<text font-size="3.85" fill="#444" transform="translate(84.60,281.75) scale(0.86,1)" text-anchor="middle" >fix</text>
<text font-size="4.28" fill="#7f93bd" x="14.80" y="290.50" textLength="12.10" lengthAdjust="spacingAndGlyphs" >Radius 1</text>
<rect x="51.00" y="286.40" width="25.00" height="5.00" fill="#fff" stroke="#9a9a9a" stroke-width="0.4" />
<text font-size="4.17" fill="#557" transform="translate(51.80,290.46) scale(0.86,1)" >15</text>
<text font-size="4.28" fill="#30406a" x="14.80" y="298.90" textLength="13.00" lengthAdjust="spacingAndGlyphs" >Radius 2</text>
<rect x="51.00" y="294.80" width="25.00" height="5.00" fill="#fff" stroke="#9a9a9a" stroke-width="0.4" />
<text font-size="4.17" fill="#224" transform="translate(51.80,298.86) scale(0.86,1)" >20</text>
<text font-size="4.28" fill="#30406a" x="14.80" y="307.20" textLength="9.50" lengthAdjust="spacingAndGlyphs" >Slope</text>
<rect x="51.00" y="303.00" width="25.00" height="5.00" fill="#fff" stroke="#9a9a9a" stroke-width="0.4" />
<text font-size="4.17" fill="#224" transform="translate(51.80,307.06) scale(0.86,1)" font-weight="bold" >6</text>
<rect x="16.60" y="312.00" width="3.50" height="3.80" fill="#fff" />
<text font-size="3.75" fill="#4a62a8" x="20.80" y="315.31" textLength="24.70" lengthAdjust="spacingAndGlyphs" >Use fixed slope</text>
<text font-size="4.28" fill="#30406a" x="14.80" y="323.50" textLength="9.50" lengthAdjust="spacingAndGlyphs" >Slope</text>
<rect x="51.00" y="319.40" width="25.00" height="5.00" fill="#fafcff" stroke="#bbb" stroke-width="0.4" />
<text font-size="4.17" fill="#b5bac5" transform="translate(52.00,323.46) scale(0.86,1)" >71.15</text>
<path d="M16.8 331.3 L17.6 332.2 L19.1 330.1" stroke="#111" stroke-width="0.65" fill="none" />
<text font-size="4.28" fill="#6b86c5" x="23.10" y="333.20" textLength="9.40" lengthAdjust="spacingAndGlyphs" >Name</text>
<rect x="51.00" y="329.00" width="19.00" height="5.00" fill="#fff" stroke="#9a9a9a" stroke-width="0.4" />
<text font-size="4.17" fill="#432" transform="translate(51.80,333.06) scale(0.86,1)" font-weight="bold" >flange_top</text>
<text font-size="4.28" fill="#2a3555" x="14.80" y="341.60" textLength="17.70" lengthAdjust="spacingAndGlyphs" >Base point</text>
<rect x="51.00" y="337.40" width="19.00" height="5.40" fill="#fff" stroke="#9a9a9a" stroke-width="0.4" />
<text font-size="4.17" fill="#536" transform="translate(51.80,341.66) scale(0.86,1)" >p3005</text>
<text font-size="4.28" fill="#223" x="14.80" y="350.20" textLength="11.20" lengthAdjust="spacingAndGlyphs" >Height</text>
<rect x="51.00" y="345.60" width="19.00" height="5.80" fill="#fff" stroke="#9a9a9a" stroke-width="0.4" />
<text font-size="4.17" fill="#225" transform="translate(51.80,350.06) scale(0.86,1)" font-weight="bold" >35.5</text>
<rect x="72.00" y="345.20" width="14.00" height="6.20" fill="#dcdcdc" />
<line x1="72.00" y1="351.40" x2="86.00" y2="351.40" stroke="#999" stroke-width="0.6" />
<text font-size="3.85" fill="#444" transform="translate(79.00,349.75) scale(0.86,1)" text-anchor="middle" >fix</text>
<text font-size="4.28" fill="#6a7cb0" x="14.80" y="357.70" textLength="12.10" lengthAdjust="spacingAndGlyphs" >Radius 1</text>
<rect x="51.00" y="354.00" width="19.00" height="3.00" fill="#fff" stroke="#9a9a9a" stroke-width="0.4" />
<text font-size="4.17" fill="#557" transform="translate(52.00,357.76) scale(0.86,1)" >15</text>
<rect x="10.00" y="357.00" width="680.00" height="10.00" fill="#bccfe9" />
<text font-size="5.56" fill="#111" transform="translate(17.30,364.95) scale(0.86,1)" font-weight="bold" text-anchor="middle" >T</text>
<g clip-path="url(#botclip)">
<circle cx="32.00" cy="363.00" r="7" fill="#1a9a3e"/>
<path d="M35.7 363 H29.4" stroke="#fff" stroke-width="2.0" fill="none" />
<path d="M31.7 359.6 L28.2 363 L31.7 366.4" stroke="#fff" stroke-width="1.9" fill="none" stroke-linejoin="miter"/>
<circle cx="46.60" cy="363.00" r="7" fill="#1a9a3e"/>
<path d="M42.9 363 H49.2" stroke="#fff" stroke-width="2.0" fill="none" />
<path d="M46.9 359.6 L50.4 363 L46.9 366.4" stroke="#fff" stroke-width="1.9" fill="none" stroke-linejoin="miter"/>
</g>
<rect x="61.30" y="359.20" width="18.00" height="7.80" fill="#3bb54a" />
<text font-size="4.17" fill="#d8f3da" transform="translate(70.30,364.76) scale(0.86,1)" text-anchor="middle" >Apply</text>
<path d="M316.5 128 V86.5 H470.5 V128" stroke="#3842aa" stroke-width="1" fill="none" />
<path d="M316.5 128 L324.6 167.8 Q326.6 176.5 336 176.5 H451 Q460.4 176.5 462.4 167.8 L470.5 128" stroke="#3842aa" stroke-width="1" fill="none" />
<path d="M316.5 239 V280.5 H470.5 V239" stroke="#3842aa" stroke-width="1" fill="none" />
<path d="M316.5 239 L324.6 199.2 Q326.6 190.5 336 190.5 H451 Q460.4 190.5 462.4 199.2 L470.5 239" stroke="#3842aa" stroke-width="1" fill="none" />
<line x1="336.00" y1="190.50" x2="451.00" y2="190.50" stroke="#a884d4" stroke-width="1" />
<rect x="251.50" y="127.50" width="52.00" height="112.00" fill="none" stroke="#3842aa" stroke-width="1" />
<rect x="484.50" y="127.50" width="51.00" height="112.00" fill="none" stroke="#3842aa" stroke-width="1" />
<line x1="303.50" y1="138.00" x2="303.50" y2="229.00" stroke="#9a7fd0" stroke-width="1" />
<path d="M304.8 137.3 L307 135.5 H316" stroke="#1f9636" stroke-width="0.95" fill="none" />
<path d="M316 135.5 Q319 135.5 320.6 140 L327.2 160 Q331 172.6 340 173" stroke="#1f9636" stroke-width="0.95" fill="none" stroke-dasharray="5.5 0.9"/>
<line x1="338.00" y1="173.00" x2="449.00" y2="173.00" stroke="#c4e8c4" stroke-width="1.1" />
<path d="M470.8 135.5 H480.3 L481.5 136.6" stroke="#1f9636" stroke-width="0.95" fill="none" />
<path d="M303.2 138 Q299.8 170 296.8 207 L295 221" stroke="#1f9636" stroke-width="0.95" fill="none" stroke-dasharray="6.5 1.3"/>
<path d="M295 221 Q294.3 229.6 298.5 230.2 L309.5 231 L323.5 206.5 Q330 194 339 193.5 H449" stroke="#1f9636" stroke-width="1.0" fill="none" />
<line x1="303.50" y1="137.50" x2="318.40" y2="137.50" stroke="#f01c24" stroke-width="1.1" />
<line x1="303.50" y1="229.50" x2="319.00" y2="229.50" stroke="#f01c24" stroke-width="1.1" />
<circle cx="303.30" cy="127.20" r="0.85" fill="#101030"/>
<circle cx="303.10" cy="137.40" r="0.85" fill="#101030"/>
<circle cx="303.30" cy="176.40" r="0.85" fill="#101030"/>
<circle cx="303.30" cy="183.30" r="0.85" fill="#101030"/>
<circle cx="303.30" cy="190.00" r="0.85" fill="#101030"/>
<circle cx="303.20" cy="229.60" r="0.85" fill="#101030"/>
<circle cx="324.80" cy="168.80" r="0.85" fill="#101030"/>
<circle cx="334.60" cy="176.90" r="0.85" fill="#101030"/>
<circle cx="324.80" cy="197.80" r="0.85" fill="#101030"/>
<circle cx="334.80" cy="190.20" r="0.85" fill="#101030"/>
<circle cx="393.50" cy="176.60" r="0.85" fill="#101030"/>
<circle cx="393.50" cy="190.40" r="0.85" fill="#101030"/>
<circle cx="316.50" cy="127.60" r="0.85" fill="#101030"/>
<circle cx="303.50" cy="239.60" r="0.85" fill="#101030"/>
<circle cx="316.50" cy="239.40" r="0.85" fill="#101030"/>
<circle cx="470.80" cy="127.30" r="0.85" fill="#101030"/>
<circle cx="484.30" cy="127.00" r="0.85" fill="#101030"/>
<line x1="393.50" y1="176.50" x2="393.50" y2="190.50" stroke="#111" stroke-width="0.9" />
<line x1="388.60" y1="183.50" x2="399.00" y2="183.50" stroke="#111" stroke-width="1.0" />
<rect x="6.00" y="39.00" width="4.00" height="328.00" fill="#0b75be" />
<rect x="417.20" y="136.80" width="688.00" height="336.00" fill="#0b75be" />
<g transform="translate(411.7,102)">
<rect x="163.00" y="46.00" width="527.00" height="311.00" fill="#fff" />
<rect x="10.00" y="39.00" width="680.00" height="7.20" fill="#fff" />
<path d="M11 42.5 L12 43.8 L13.6 40.8" stroke="#1f6fd0" stroke-width="0.9" fill="none" />
<text font-size="3.53" fill="#3a3a55" x="16.30" y="43.44" opacity="0.75" textLength="145.5" lengthAdjust="spacing">Roll Pass Designer 1.0.7 - C:\Projects\Rolling Mill\Beams\Structural\I-beam 200\project_v2.rpd</text>
<line x1="683.00" y1="40.50" x2="685.50" y2="43.00" stroke="#bbb" stroke-width="0.4" />
<rect x="163.00" y="46.60" width="525.00" height="7.20" fill="#f1f1f1" />
<line x1="163.00" y1="46.40" x2="612.00" y2="46.40" stroke="#d4d4d4" stroke-width="0.5" />
<text font-size="4.17" fill="#2a2a45" transform="translate(166.60,51.66) scale(0.86,1)" >File</text>
<text font-size="4.17" fill="#2a2a45" transform="translate(177.30,51.66) scale(0.86,1)" >View</text>
<text font-size="4.17" fill="#2a2a45" transform="translate(189.30,51.66) scale(0.86,1)" >Export</text>
<text font-size="4.17" fill="#2a2a45" transform="translate(204.80,51.66) scale(0.86,1)" >Database</text>
<text font-size="4.17" fill="#2a2a45" transform="translate(224.30,51.66) scale(0.86,1)" >Case</text>
<text font-size="4.17" fill="#2a2a45" transform="translate(235.80,51.66) scale(0.86,1)" >Settings</text>
<text font-size="4.17" fill="#2a2a45" transform="translate(253.80,51.66) scale(0.86,1)" >Help</text>
<rect x="612.00" y="46.20" width="21.00" height="7.80" fill="#b4daf3" />
<line x1="612.00" y1="46.50" x2="633.00" y2="46.50" stroke="#2a5a8a" stroke-width="0.8" />
<text font-size="4.07" fill="#213" transform="translate(622.50,51.82) scale(0.86,1)" text-anchor="middle" >Default</text>
<rect x="636.00" y="46.20" width="21.00" height="7.40" fill="#e0e0e0" stroke="#b8b8b8" stroke-width="0.4" />
<line x1="636.00" y1="46.50" x2="657.00" y2="46.50" stroke="#444" stroke-width="0.8" />
<text font-size="4.07" fill="#322" transform="translate(646.50,51.82) scale(0.86,1)" text-anchor="middle" >Seamark</text>
<rect x="660.00" y="46.20" width="27.00" height="7.40" fill="#e0e0e0" stroke="#b8b8b8" stroke-width="0.4" />
<line x1="660.00" y1="46.50" x2="687.00" y2="46.50" stroke="#444" stroke-width="0.8" />
<text font-size="4.07" fill="#446" transform="translate(673.50,51.82) scale(0.86,1)" text-anchor="middle" >Save Image</text>
<circle cx="168.60" cy="62.40" r="0.45" fill="#333"/>
<rect x="169.00" y="271.60" width="20.60" height="38.60" fill="#f6f6f6" />
<text font-size="4.07" fill="#335" transform="translate(179.00,277.02) scale(0.86,1)" text-anchor="middle" >10</text>
<text font-size="4.07" fill="#223" transform="translate(179.00,284.22) scale(0.86,1)" font-weight="bold" text-anchor="middle" >2A</text>
<rect x="170.20" y="286.80" width="17.40" height="6.40" fill="#3c78b4" stroke="#c9b46a" stroke-width="0.5" />
<text font-size="4.07" fill="#123" transform="translate(179.00,291.42) scale(0.86,1)" text-anchor="middle" >2</text>
<text font-size="4.07" fill="#99a" transform="translate(179.00,298.62) scale(0.86,1)" text-anchor="middle" >AA</text>
<text font-size="3.85" fill="#9aa" transform="translate(179.00,308.35) scale(0.86,1)" text-anchor="middle" >Layer</text>
<line x1="163.00" y1="314.60" x2="690.00" y2="314.60" stroke="#e6e6e6" stroke-width="0.6" />
<rect x="163.00" y="315.00" width="527.00" height="8.40" fill="#fbfbfb" />
<text font-size="4.17" fill="#223" transform="translate(165.60,320.06) scale(0.86,1)" >Forecast results</text>
<line x1="194.60" y1="315.60" x2="194.60" y2="321.80" stroke="#777" stroke-width="0.5" />
<rect x="165.60" y="323.60" width="524.40" height="7.00" fill="#f6f9fd" />
<rect x="165.60" y="330.60" width="524.40" height="6.40" fill="#fff" />
<rect x="165.60" y="337.00" width="524.40" height="6.30" fill="#f1f1f1" />
<rect x="165.60" y="343.80" width="524.40" height="6.20" fill="#fff" />
<rect x="165.60" y="350.00" width="524.40" height="6.50" fill="#f1f1f1" />
<rect x="165.60" y="351.00" width="524.40" height="5.30" fill="#5a55b4" />
<line x1="165.60" y1="323.60" x2="165.60" y2="356.50" stroke="#e2e2e2" stroke-width="0.4" />
<line x1="178.50" y1="323.60" x2="178.50" y2="356.50" stroke="#e2e2e2" stroke-width="0.4" />
<line x1="185.50" y1="323.60" x2="185.50" y2="356.50" stroke="#e2e2e2" stroke-width="0.4" />
<line x1="219.50" y1="323.60" x2="219.50" y2="356.50" stroke="#e2e2e2" stroke-width="0.4" />
<line x1="219.50" y1="330.60" x2="219.50" y2="356.50" stroke="#777" stroke-width="0.5" />
<line x1="270.50" y1="323.60" x2="270.50" y2="356.50" stroke="#e2e2e2" stroke-width="0.4" />
<line x1="285.50" y1="323.60" x2="285.50" y2="356.50" stroke="#e2e2e2" stroke-width="0.4" />
<line x1="301.50" y1="323.60" x2="301.50" y2="356.50" stroke="#e2e2e2" stroke-width="0.4" />
<line x1="301.50" y1="330.60" x2="301.50" y2="356.50" stroke="#777" stroke-width="0.5" />
<line x1="316.00" y1="323.60" x2="316.00" y2="356.50" stroke="#e2e2e2" stroke-width="0.4" />
<line x1="331.50" y1="323.60" x2="331.50" y2="356.50" stroke="#e2e2e2" stroke-width="0.4" />
<line x1="362.00" y1="323.60" x2="362.00" y2="356.50" stroke="#e2e2e2" stroke-width="0.4" />
<line x1="371.00" y1="323.60" x2="371.00" y2="356.50" stroke="#e2e2e2" stroke-width="0.4" />
<line x1="379.00" y1="323.60" x2="379.00" y2="356.50" stroke="#e2e2e2" stroke-width="0.4" />
<line x1="379.00" y1="330.60" x2="379.00" y2="356.50" stroke="#777" stroke-width="0.5" />
<line x1="388.50" y1="323.60" x2="388.50" y2="356.50" stroke="#e2e2e2" stroke-width="0.4" />
<line x1="403.50" y1="323.60" x2="403.50" y2="356.50" stroke="#e2e2e2" stroke-width="0.4" />
<line x1="427.00" y1="323.60" x2="427.00" y2="356.50" stroke="#e2e2e2" stroke-width="0.4" />
<line x1="438.00" y1="323.60" x2="438.00" y2="356.50" stroke="#e2e2e2" stroke-width="0.4" />
<line x1="452.00" y1="323.60" x2="452.00" y2="356.50" stroke="#e2e2e2" stroke-width="0.4" />
<line x1="452.00" y1="330.60" x2="452.00" y2="356.50" stroke="#777" stroke-width="0.5" />
<line x1="464.00" y1="323.60" x2="464.00" y2="356.50" stroke="#e2e2e2" stroke-width="0.4" />
<line x1="490.00" y1="323.60" x2="490.00" y2="356.50" stroke="#e2e2e2" stroke-width="0.4" />
<line x1="505.00" y1="323.60" x2="505.00" y2="356.50" stroke="#e2e2e2" stroke-width="0.4" />
<line x1="520.00" y1="323.60" x2="520.00" y2="356.50" stroke="#e2e2e2" stroke-width="0.4" />
<line x1="520.00" y1="330.60" x2="520.00" y2="356.50" stroke="#777" stroke-width="0.5" />
<line x1="535.00" y1="323.60" x2="535.00" y2="356.50" stroke="#e2e2e2" stroke-width="0.4" />
<line x1="565.00" y1="323.60" x2="565.00" y2="356.50" stroke="#e2e2e2" stroke-width="0.4" />
<line x1="580.00" y1="323.60" x2="580.00" y2="356.50" stroke="#e2e2e2" stroke-width="0.4" />
<line x1="600.00" y1="323.60" x2="600.00" y2="356.50" stroke="#e2e2e2" stroke-width="0.4" />
<line x1="600.00" y1="330.60" x2="600.00" y2="356.50" stroke="#777" stroke-width="0.5" />
<line x1="640.00" y1="323.60" x2="640.00" y2="356.50" stroke="#e2e2e2" stroke-width="0.4" />
<line x1="660.00" y1="323.60" x2="660.00" y2="356.50" stroke="#e2e2e2" stroke-width="0.4" />
<line x1="680.00" y1="323.60" x2="680.00" y2="356.50" stroke="#e2e2e2" stroke-width="0.4" />
<line x1="165.60" y1="330.60" x2="690.00" y2="330.60" stroke="#d5d5d5" stroke-width="0.4" />
<line x1="165.60" y1="337.00" x2="690.00" y2="337.00" stroke="#d5d5d5" stroke-width="0.4" />
<line x1="165.60" y1="350.00" x2="690.00" y2="350.00" stroke="#d5d5d5" stroke-width="0.4" />
<line x1="178.50" y1="351.00" x2="178.50" y2="356.30" stroke="#cfcfee" stroke-width="0.7" />
<line x1="185.50" y1="351.00" x2="185.50" y2="356.30" stroke="#cfcfee" stroke-width="0.7" />
<line x1="202.50" y1="351.00" x2="202.50" y2="356.30" stroke="#cfcfee" stroke-width="0.7" />
<line x1="219.50" y1="351.00" x2="219.50" y2="356.30" stroke="#cfcfee" stroke-width="0.7" />
<line x1="238.50" y1="351.00" x2="238.50" y2="356.30" stroke="#cfcfee" stroke-width="0.7" />
<line x1="255.70" y1="351.00" x2="255.70" y2="356.30" stroke="#cfcfee" stroke-width="0.7" />
<line x1="270.50" y1="351.00" x2="270.50" y2="356.30" stroke="#cfcfee" stroke-width="0.7" />
<line x1="285.50" y1="351.00" x2="285.50" y2="356.30" stroke="#cfcfee" stroke-width="0.7" />
<line x1="301.50" y1="351.00" x2="301.50" y2="356.30" stroke="#cfcfee" stroke-width="0.7" />
<line x1="316.00" y1="351.00" x2="316.00" y2="356.30" stroke="#cfcfee" stroke-width="0.7" />
<line x1="331.50" y1="351.00" x2="331.50" y2="356.30" stroke="#cfcfee" stroke-width="0.7" />
<line x1="347.60" y1="351.00" x2="347.60" y2="356.30" stroke="#cfcfee" stroke-width="0.7" />
<line x1="362.00" y1="351.00" x2="362.00" y2="356.30" stroke="#cfcfee" stroke-width="0.7" />
<line x1="371.00" y1="351.00" x2="371.00" y2="356.30" stroke="#cfcfee" stroke-width="0.7" />
<line x1="379.00" y1="351.00" x2="379.00" y2="356.30" stroke="#cfcfee" stroke-width="0.7" />
<line x1="388.50" y1="351.00" x2="388.50" y2="356.30" stroke="#cfcfee" stroke-width="0.7" />
<line x1="403.50" y1="351.00" x2="403.50" y2="356.30" stroke="#cfcfee" stroke-width="0.7" />
<line x1="413.40" y1="351.00" x2="413.40" y2="356.30" stroke="#cfcfee" stroke-width="0.7" />
<line x1="427.00" y1="351.00" x2="427.00" y2="356.30" stroke="#cfcfee" stroke-width="0.7" />
<line x1="438.00" y1="351.00" x2="438.00" y2="356.30" stroke="#cfcfee" stroke-width="0.7" />
<line x1="452.00" y1="351.00" x2="452.00" y2="356.30" stroke="#cfcfee" stroke-width="0.7" />
<line x1="464.00" y1="351.00" x2="464.00" y2="356.30" stroke="#cfcfee" stroke-width="0.7" />
<line x1="476.00" y1="351.00" x2="476.00" y2="356.30" stroke="#cfcfee" stroke-width="0.7" />
<line x1="490.00" y1="351.00" x2="490.00" y2="356.30" stroke="#cfcfee" stroke-width="0.7" />
<line x1="505.00" y1="351.00" x2="505.00" y2="356.30" stroke="#cfcfee" stroke-width="0.7" />
<line x1="520.00" y1="351.00" x2="520.00" y2="356.30" stroke="#cfcfee" stroke-width="0.7" />
<line x1="535.00" y1="351.00" x2="535.00" y2="356.30" stroke="#cfcfee" stroke-width="0.7" />
<line x1="550.00" y1="351.00" x2="550.00" y2="356.30" stroke="#cfcfee" stroke-width="0.7" />
<line x1="565.00" y1="351.00" x2="565.00" y2="356.30" stroke="#cfcfee" stroke-width="0.7" />
<line x1="580.00" y1="351.00" x2="580.00" y2="356.30" stroke="#cfcfee" stroke-width="0.7" />
<line x1="600.00" y1="351.00" x2="600.00" y2="356.30" stroke="#cfcfee" stroke-width="0.7" />
<line x1="620.00" y1="351.00" x2="620.00" y2="356.30" stroke="#cfcfee" stroke-width="0.7" />
<line x1="640.00" y1="351.00" x2="640.00" y2="356.30" stroke="#cfcfee" stroke-width="0.7" />
<line x1="660.00" y1="351.00" x2="660.00" y2="356.30" stroke="#cfcfee" stroke-width="0.7" />
<line x1="680.00" y1="351.00" x2="680.00" y2="356.30" stroke="#cfcfee" stroke-width="0.7" />
<line x1="202.50" y1="330.80" x2="202.50" y2="356.40" stroke="#111" stroke-width="0.8" />
<line x1="238.50" y1="330.80" x2="238.50" y2="356.40" stroke="#111" stroke-width="0.8" />
<line x1="255.70" y1="330.80" x2="255.70" y2="356.40" stroke="#111" stroke-width="0.8" />
<line x1="347.60" y1="330.80" x2="347.60" y2="356.40" stroke="#111" stroke-width="0.8" />
<line x1="413.40" y1="330.80" x2="413.40" y2="356.40" stroke="#111" stroke-width="0.8" />
<line x1="476.00" y1="330.80" x2="476.00" y2="356.40" stroke="#111" stroke-width="0.8" />
<line x1="550.00" y1="330.80" x2="550.00" y2="356.40" stroke="#111" stroke-width="0.8" />
<line x1="620.00" y1="330.80" x2="620.00" y2="356.40" stroke="#111" stroke-width="0.8" />
<line x1="165.60" y1="343.40" x2="690.00" y2="343.40" stroke="#111" stroke-width="0.9" />
<text font-size="3.96" fill="#7ab" transform="translate(166.50,328.59) scale(0.86,1)" >i</text>
<text font-size="3.96" fill="#68a" transform="translate(180.50,328.59) scale(0.86,1)" >N</text>
<text font-size="3.96" fill="#b65" transform="translate(187.00,328.59) scale(0.86,1)" >Rotate,°</text>
<text font-size="3.96" fill="#b56" transform="translate(204.00,328.59) scale(0.86,1)" >n, RPM</text>
<text font-size="3.96" fill="#865" transform="translate(221.00,328.59) scale(0.86,1)" >n_a, RPM</text>
<text font-size="3.96" fill="#834" transform="translate(240.00,328.59) scale(0.86,1)" >d_r, mm</text>
<text font-size="3.96" fill="#c98" transform="translate(257.00,328.59) scale(0.86,1)" >H, mm</text>
<text font-size="3.96" fill="#8ad" transform="translate(272.00,328.59) scale(0.86,1)" >ΔH, mm</text>
<text font-size="3.96" fill="#546" transform="translate(287.00,328.59) scale(0.86,1)" >B, mm</text>
<text font-size="3.96" fill="#997" transform="translate(303.00,328.59) scale(0.86,1)" >L, mm</text>
<text font-size="3.96" fill="#9ab" transform="translate(317.50,328.59) scale(0.86,1)" >F, mm²</text>
<text font-size="3.96" fill="#558" transform="translate(333.00,328.59) scale(0.86,1)" >Lb, mm</text>
<text font-size="3.96" fill="#da8" transform="translate(349.00,328.59) scale(0.86,1)" >λ</text>
<text font-size="3.96" fill="#aab" transform="translate(363.00,328.59) scale(0.86,1)" >μ</text>
<text font-size="3.96" fill="#aab" transform="translate(372.00,328.59) scale(0.86,1)" >ε, -</text>
<text font-size="3.96" fill="#bbb" transform="translate(380.50,328.59) scale(0.86,1)" >λΣ</text>
<text font-size="3.96" fill="#ca8" transform="translate(390.00,328.59) scale(0.86,1)" >v, m/s</text>
<text font-size="3.96" fill="#47c" transform="translate(405.00,328.59) scale(0.86,1)" >β, -</text>
<text font-size="3.96" fill="#da8" transform="translate(415.00,328.59) scale(0.86,1)" >t, s</text>
<text font-size="3.96" fill="#db8" transform="translate(428.00,328.59) scale(0.86,1)" >T, °C</text>
<text font-size="3.96" fill="#8ad" transform="translate(440.00,328.59) scale(0.86,1)" >P, kN</text>
<text font-size="4.17" fill="#999" transform="translate(178.00,335.26) scale(0.86,1)" text-anchor="end" ></text>
<text font-size="4.17" fill="#333" transform="translate(184.80,335.26) scale(0.86,1)" text-anchor="end" >0</text>
<text font-size="4.17" fill="#444" transform="translate(187.00,335.26) scale(0.86,1)" >0</text>
<text font-size="4.17" fill="#1fa21f" transform="translate(204.00,335.26) scale(0.86,1)" font-weight="bold" >0</text>
<text font-size="4.17" fill="#555" transform="translate(221.00,335.26) scale(0.86,1)" >1</text>
<text font-size="4.17" fill="#111" transform="translate(240.00,335.26) scale(0.86,1)" font-weight="bold" >0</text>
<text font-size="4.17" fill="#1fa21f" transform="translate(257.00,335.26) scale(0.86,1)" font-weight="bold" >202.5</text>
<text font-size="4.17" fill="#35a" transform="translate(272.00,335.26) scale(0.86,1)" >3</text>
<text font-size="4.17" fill="#432" transform="translate(287.00,335.26) scale(0.86,1)" >152</text>
<text font-size="4.17" fill="#753" transform="translate(303.00,335.26) scale(0.86,1)" >2032</text>
<text font-size="4.17" fill="#235" transform="translate(317.50,335.26) scale(0.86,1)" >30380</text>
<text font-size="4.17" fill="#b73" transform="translate(333.00,335.26) scale(0.86,1)" >6</text>
<text font-size="4.17" fill="#47c" transform="translate(349.00,335.26) scale(0.86,1)" >1</text>
<text font-size="4.17" fill="#b62" transform="translate(363.50,335.26) scale(0.86,1)" >0</text>
<text font-size="4.17" fill="#238" transform="translate(372.50,335.26) scale(0.86,1)" >0</text>
<text font-size="4.17" fill="#47c" transform="translate(380.50,335.26) scale(0.86,1)" >1</text>
<text font-size="4.17" fill="#b83" transform="translate(390.00,335.26) scale(0.86,1)" >0</text>
<text font-size="4.17" fill="#36b" transform="translate(408.00,335.26) scale(0.86,1)" >0</text>
<text font-size="4.17" fill="#a63" transform="translate(428.00,335.26) scale(0.86,1)" >1200</text>
<text font-size="4.17" fill="#58c" transform="translate(440.00,335.26) scale(0.86,1)" >0</text>
<text font-size="4.17" fill="#556" transform="translate(178.00,341.66) scale(0.86,1)" text-anchor="end" >100.41</text>
<text font-size="4.17" fill="#557" transform="translate(184.80,341.66) scale(0.86,1)" text-anchor="end" >73</text>
<text font-size="4.17" fill="#666" transform="translate(187.00,341.66) scale(0.86,1)" >0</text>
<text font-size="4.17" fill="#1fa21f" transform="translate(204.00,341.66) scale(0.86,1)" font-weight="bold" >30</text>
<text font-size="4.17" fill="#446" transform="translate(221.00,341.66) scale(0.86,1)" >1.41</text>
<text font-size="4.17" fill="#000" transform="translate(240.00,341.66) scale(0.86,1)" font-weight="bold" >34.48</text>
<text font-size="4.17" fill="#1fa21f" transform="translate(257.00,341.66) scale(0.86,1)" font-weight="bold" >175.76</text>
<text font-size="4.17" fill="#667" transform="translate(272.00,341.66) scale(0.86,1)" >19</text>
<text font-size="4.17" fill="#211" transform="translate(287.00,341.66) scale(0.86,1)" font-weight="bold" >173</text>
<text font-size="4.17" fill="#876" transform="translate(303.00,341.66) scale(0.86,1)" >2.76</text>
<text font-size="4.17" fill="#679" transform="translate(317.50,341.66) scale(0.86,1)" >27341</text>
<text font-size="4.17" fill="#446" transform="translate(333.00,341.66) scale(0.86,1)" >6408.8</text>
<text font-size="4.17" fill="#b73" transform="translate(349.00,341.66) scale(0.86,1)" >1.087</text>
<text font-size="4.17" fill="#c84" transform="translate(363.00,341.66) scale(0.86,1)" >3.22</text>
<text font-size="4.17" fill="#458" transform="translate(372.00,341.66) scale(0.86,1)" >0.09</text>
<text font-size="4.17" fill="#666" transform="translate(380.50,341.66) scale(0.86,1)" >24.1</text>
<text font-size="4.17" fill="#964" transform="translate(390.00,341.66) scale(0.86,1)" >0.2875</text>
<text font-size="4.17" fill="#bbb" transform="translate(406.00,341.66) scale(0.86,1)" >1</text>
<text font-size="4.17" fill="#666" transform="translate(415.00,341.66) scale(0.86,1)" >1.1743</text>
<text font-size="4.17" fill="#975" transform="translate(428.00,341.66) scale(0.86,1)" >1192.5</text>
<text font-size="4.17" fill="#977" transform="translate(440.00,341.66) scale(0.86,1)" >847</text>
<text font-size="4.17" fill="#558" transform="translate(178.00,348.36) scale(0.86,1)" text-anchor="end" >100.2</text>
<text font-size="4.17" fill="#446" transform="translate(184.80,348.36) scale(0.86,1)" text-anchor="end" >73</text>
<text font-size="4.17" fill="#444" transform="translate(187.00,348.36) scale(0.86,1)" >0</text>
<text font-size="4.17" fill="#1fa21f" transform="translate(204.00,348.36) scale(0.86,1)" font-weight="bold" >32.52</text>
<text font-size="4.17" fill="#865" transform="translate(221.00,348.36) scale(0.86,1)" >1.046</text>
<text font-size="4.17" fill="#446" transform="translate(240.00,348.36) scale(0.86,1)" >3.37</text>
<text font-size="4.17" fill="#1fa21f" transform="translate(257.00,348.36) scale(0.86,1)" font-weight="bold" >169.8</text>
<text font-size="4.17" fill="#9ab" transform="translate(272.00,348.36) scale(0.86,1)" >1.64</text>
<text font-size="4.17" fill="#322" transform="translate(287.00,348.36) scale(0.86,1)" >171.09</text>
<text font-size="4.17" fill="#765" transform="translate(303.00,348.36) scale(0.86,1)" >1272</text>
<text font-size="4.17" fill="#457" transform="translate(317.50,348.36) scale(0.86,1)" >24590</text>
<text font-size="4.17" fill="#865" transform="translate(333.00,348.36) scale(0.86,1)" >6552.8</text>
<text font-size="4.17" fill="#446" transform="translate(349.00,348.36) scale(0.86,1)" >1.022</text>
<text font-size="4.17" fill="#c95" transform="translate(363.00,348.36) scale(0.86,1)" >0.021</text>
<text font-size="4.17" fill="#446" transform="translate(372.00,348.36) scale(0.86,1)" >0.02</text>
<text font-size="4.17" fill="#568" transform="translate(380.50,348.36) scale(0.86,1)" >24.11</text>
<text font-size="4.17" fill="#875" transform="translate(390.00,348.36) scale(0.86,1)" >0.2875</text>
<text font-size="4.17" fill="#ccc" transform="translate(406.00,348.36) scale(0.86,1)" >1</text>
<text font-size="4.17" fill="#555" transform="translate(415.00,348.36) scale(0.86,1)" >1.1743</text>
<text font-size="4.17" fill="#986" transform="translate(428.00,348.36) scale(0.86,1)" >1188.1</text>
<text font-size="4.17" fill="#9ab" transform="translate(440.00,348.36) scale(0.86,1)" >1.047</text>
<text font-size="4.17" fill="#2a2a6a" transform="translate(178.00,354.76) scale(0.86,1)" text-anchor="end" >97.03</text>
<text font-size="4.17" fill="#2a2a6a" transform="translate(184.80,354.76) scale(0.86,1)" text-anchor="end" >74</text>
<text font-size="4.17" fill="#2a2a6a" transform="translate(187.00,354.76) scale(0.86,1)" >0</text>
<text font-size="4.17" fill="#2c5" transform="translate(204.00,354.76) scale(0.86,1)" font-weight="bold" >33.71</text>
<text font-size="4.17" fill="#2a2a6a" transform="translate(221.00,354.76) scale(0.86,1)" >1.03</text>
<text font-size="4.17" fill="#2a2a6a" transform="translate(240.00,354.76) scale(0.86,1)" >47.89</text>
<text font-size="4.17" fill="#2c5" transform="translate(257.00,354.76) scale(0.86,1)" font-weight="bold" >116.27</text>
<text font-size="4.17" fill="#2a2a6a" transform="translate(272.00,354.76) scale(0.86,1)" >3.77</text>
<text font-size="4.17" fill="#2a2a6a" transform="translate(287.00,354.76) scale(0.86,1)" >168.7</text>
<text font-size="4.17" fill="#2a2a6a" transform="translate(303.00,354.76) scale(0.86,1)" >1274</text>
<text font-size="4.17" fill="#2a2a6a" transform="translate(317.50,354.76) scale(0.86,1)" >19825</text>
<text font-size="4.17" fill="#2a2a6a" transform="translate(333.00,354.76) scale(0.86,1)" >6771.6</text>
<text font-size="4.17" fill="#2a2a6a" transform="translate(349.00,354.76) scale(0.86,1)" >1.0664</text>
<text font-size="4.17" fill="#2a2a6a" transform="translate(363.00,354.76) scale(0.86,1)" >0.032</text>
<text font-size="4.17" fill="#2a2a6a" transform="translate(372.00,354.76) scale(0.86,1)" >0.16</text>
<text font-size="4.17" fill="#2a2a6a" transform="translate(380.50,354.76) scale(0.86,1)" >26.11</text>
<text font-size="4.17" fill="#2a2a6a" transform="translate(390.00,354.76) scale(0.86,1)" >0.30022</text>
<text font-size="4.17" fill="#2a2a6a" transform="translate(415.00,354.76) scale(0.86,1)" >1.2411</text>
<text font-size="4.17" fill="#2a2a6a" transform="translate(428.00,354.76) scale(0.86,1)" >1180</text>
<text font-size="4.17" fill="#2a2a6a" transform="translate(440.00,354.76) scale(0.86,1)" >1.281</text>
<path d="M163.5 354 L164.5 355.2" stroke="#999" stroke-width="0.4" fill="none" />
<rect x="10.00" y="46.00" width="147.50" height="311.00" fill="#d6e4f4" />
<rect x="157.50" y="46.00" width="5.50" height="311.00" fill="#f0f0f0" />
<rect x="158.20" y="51.20" width="4.70" height="114.30" fill="#cbcbcb" />
<path d="M159.2 50.3 L160.4 49 L161.6 50.3" stroke="#888" stroke-width="0.4" fill="none" />
<path d="M159.2 353.8 L160.4 355 L161.6 353.8" stroke="#888" stroke-width="0.4" fill="none" />
<circle cx="12.50" cy="54.40" r="2.15" fill="#fff" stroke="#444" stroke-width="0.5"/>
<line x1="11.40" y1="54.40" x2="13.60" y2="54.40" stroke="#222" stroke-width="0.6" />
<text font-size="4.28" fill="#8fa3c4" x="17.40" y="56.10" textLength="26.70" lengthAdjust="spacingAndGlyphs" >Initial dimensions</text>
<text font-size="4.28" fill="#2b4a8a" x="8.30" y="62.20" textLength="9.70" lengthAdjust="spacingAndGlyphs" >Billet</text>
<rect x="21.00" y="58.60" width="3.80" height="4.00" fill="#e6eefa" stroke="#8aa0c0" stroke-width="0.4" />
<text font-size="3.64" fill="#557" transform="translate(22.00,61.97) scale(0.86,1)" >1</text>
<rect x="121.00" y="58.00" width="33.00" height="4.20" fill="#a3a3a3" />
<text font-size="3.85" fill="#666" transform="translate(137.50,61.55) scale(0.86,1)" text-anchor="middle" >Save</text>
<text font-size="4.28" fill="#b4b4bc" x="8.00" y="68.70" textLength="24.70" lengthAdjust="spacingAndGlyphs" >Height H, mm</text>
<rect x="47.50" y="64.60" width="33.50" height="5.00" fill="#fff" stroke="#b9c3d3" stroke-width="0.4" />
<text font-size="4.28" fill="#b55" transform="translate(48.70,68.70) scale(0.86,1)" >200.5</text>
<text font-size="4.28" fill="#556" x="82.80" y="68.70" textLength="21.90" lengthAdjust="spacingAndGlyphs" >Width B, mm</text>
<rect x="121.00" y="64.60" width="33.00" height="5.00" fill="#fff" stroke="#b9c3d3" stroke-width="0.4" />
<text font-size="4.28" fill="#999" transform="translate(122.20,68.70) scale(0.86,1)" >150</text>
<text font-size="4.28" fill="#334" x="8.00" y="77.20" textLength="25.00" lengthAdjust="spacingAndGlyphs" >Length L, mm</text>
<rect x="47.50" y="73.00" width="33.50" height="5.00" fill="#fff" stroke="#b9c3d3" stroke-width="0.4" />
<text font-size="4.28" fill="#522" transform="translate(48.70,77.10) scale(0.86,1)" >6000</text>
<text font-size="4.28" fill="#445" x="82.80" y="77.20" textLength="23.20" lengthAdjust="spacingAndGlyphs" >Radius R, mm</text>
<rect x="121.00" y="73.00" width="33.00" height="5.00" fill="#fff" stroke="#b9c3d3" stroke-width="0.4" />
<text font-size="4.28" fill="#333" transform="translate(122.20,77.10) scale(0.86,1)" >18.0</text>
<text font-size="4.28" fill="#161a2a" x="8.00" y="85.30" textLength="36.80" lengthAdjust="spacingAndGlyphs" font-weight="bold" >Billet temperature, °C</text>
<rect x="121.00" y="81.20" width="33.00" height="5.00" fill="#fff" stroke="#b9c3d3" stroke-width="0.4" />
<text font-size="4.28" fill="#777" transform="translate(122.20,85.30) scale(0.86,1)" >1200</text>
<text font-size="4.28" fill="#334" x="8.00" y="94.10" textLength="36.80" lengthAdjust="spacingAndGlyphs" >Average tapered, rate</text>
<rect x="121.00" y="89.80" width="33.00" height="5.00" fill="#fff" stroke="#b9c3d3" stroke-width="0.4" />
<line x1="121.00" y1="89.80" x2="154.00" y2="89.80" stroke="#555" stroke-width="0.5" />
<line x1="121.00" y1="89.80" x2="121.00" y2="94.80" stroke="#555" stroke-width="0.5" />
<text font-size="4.28" fill="#555" transform="translate(122.20,93.90) scale(0.86,1)" >2</text>
<text font-size="4.28" fill="#222" x="8.00" y="103.10" textLength="14.90" lengthAdjust="spacingAndGlyphs" font-weight="bold" >Standard</text>
<rect x="47.5" y="98.2" width="106.5" height="6.6" fill="url(#cg)" stroke="#c2c2c2" stroke-width="0.4"/>
<text font-size="4.28" fill="#222" transform="translate(49.80,103.10) scale(0.86,1)" >JIS</text>
<path d="M150.2 101.10000000000001 L151 102.0 L151.8 101.10000000000001" stroke="#777" stroke-width="0.4" fill="none" />
<text font-size="4.28" fill="#223" x="8.00" y="113.10" textLength="18.75" lengthAdjust="spacingAndGlyphs" >Steel grade</text>
<rect x="47.5" y="108.1" width="106.5" height="6.6" fill="url(#cg)" stroke="#c2c2c2" stroke-width="0.4"/>
<text font-size="4.28" fill="#222" transform="translate(49.80,113.00) scale(0.86,1)" font-weight="bold" >SS41, SS400</text>
<path d="M150.2 111.0 L151 111.89999999999999 L151.8 111.0" stroke="#777" stroke-width="0.4" fill="none" />
<text font-size="4.28" fill="#223" x="8.00" y="123.10" textLength="20.80" lengthAdjust="spacingAndGlyphs" font-weight="bold" >Roll material</text>
<rect x="47.5" y="118" width="106.5" height="6.6" fill="url(#cg)" stroke="#c2c2c2" stroke-width="0.4"/>
<text font-size="4.28" fill="#222" transform="translate(49.80,122.90) scale(0.86,1)" >Steel 60Г</text>
<path d="M150.2 120.9 L151 121.8 L151.8 120.9" stroke="#777" stroke-width="0.4" fill="none" />
<text font-size="4.28" fill="#334" x="8.00" y="132.30" textLength="30.90" lengthAdjust="spacingAndGlyphs" >Report description</text>
<rect x="47.50" y="128.50" width="106.50" height="4.70" fill="#fff" stroke="#b9c3d3" stroke-width="0.4" />
<circle cx="12.60" cy="141.60" r="2.15" fill="#fff" stroke="#444" stroke-width="0.5"/>
<line x1="11.50" y1="141.60" x2="13.70" y2="141.60" stroke="#222" stroke-width="0.6" />
<text font-size="4.28" fill="#1f2f55" x="16.40" y="143.10" textLength="23.40" lengthAdjust="spacingAndGlyphs" >Forecast of rolls</text>
<circle cx="12.60" cy="151.60" r="2.15" fill="#fff" stroke="#444" stroke-width="0.5"/>
<line x1="11.50" y1="151.60" x2="13.70" y2="151.60" stroke="#222" stroke-width="0.6" />
<text font-size="4.28" fill="#1f2f55" x="16.40" y="153.10" textLength="10.20" lengthAdjust="spacingAndGlyphs" >Stands</text>
<circle cx="12.60" cy="161.60" r="2.15" fill="#fff" stroke="#444" stroke-width="0.5"/>
<line x1="11.50" y1="161.60" x2="13.70" y2="161.60" stroke="#222" stroke-width="0.6" />
<text font-size="4.28" fill="#1f2f55" x="16.40" y="163.10" textLength="11.40" lengthAdjust="spacingAndGlyphs" >Passes</text>
<text font-size="3.75" fill="#222" transform="translate(82.50,168.31) scale(0.86,1)" font-weight="bold" text-anchor="middle" >Contact shape</text>
<rect x="10.00" y="171.00" width="140.00" height="14.50" fill="#cbe2f2" />
<rect x="10.00" y="185.50" width="47.00" height="15.00" fill="#cbe2f2" />
<rect x="11.10" y="172.00" width="11.30" height="11.50" fill="#fff" />
<line x1="11.10" y1="172.30" x2="22.40" y2="172.30" stroke="#808080" stroke-width="0.8" />
<line x1="11.10" y1="183.40" x2="22.40" y2="183.40" stroke="#707070" stroke-width="1.0" />
<line x1="11.40" y1="172.00" x2="11.40" y2="183.60" stroke="#a8a8a8" stroke-width="0.6" />
<line x1="22.10" y1="172.00" x2="22.10" y2="183.60" stroke="#9c9c9c" stroke-width="0.6" />
<rect x="26.75" y="172.00" width="11.30" height="11.50" fill="#fff" />
<line x1="26.75" y1="172.30" x2="38.05" y2="172.30" stroke="#808080" stroke-width="0.8" />
<line x1="26.75" y1="183.40" x2="38.05" y2="183.40" stroke="#707070" stroke-width="1.0" />
<line x1="27.05" y1="172.00" x2="27.05" y2="183.60" stroke="#a8a8a8" stroke-width="0.6" />
<line x1="37.75" y1="172.00" x2="37.75" y2="183.60" stroke="#9c9c9c" stroke-width="0.6" />
<rect x="42.70" y="172.00" width="11.30" height="11.50" fill="#fff" />
<line x1="42.70" y1="172.30" x2="54.00" y2="172.30" stroke="#808080" stroke-width="0.8" />
<line x1="42.70" y1="183.40" x2="54.00" y2="183.40" stroke="#707070" stroke-width="1.0" />
<line x1="43.00" y1="172.00" x2="43.00" y2="183.60" stroke="#a8a8a8" stroke-width="0.6" />
<line x1="53.70" y1="172.00" x2="53.70" y2="183.60" stroke="#9c9c9c" stroke-width="0.6" />
<rect x="58.00" y="172.00" width="11.30" height="11.50" fill="#fff" />
<line x1="58.00" y1="172.30" x2="69.30" y2="172.30" stroke="#808080" stroke-width="0.8" />
<line x1="58.00" y1="183.40" x2="69.30" y2="183.40" stroke="#707070" stroke-width="1.0" />
<line x1="58.30" y1="172.00" x2="58.30" y2="183.60" stroke="#a8a8a8" stroke-width="0.6" />
<line x1="69.00" y1="172.00" x2="69.00" y2="183.60" stroke="#9c9c9c" stroke-width="0.6" />
<rect x="74.00" y="172.00" width="11.30" height="11.50" fill="#fff" />
<line x1="74.00" y1="172.30" x2="85.30" y2="172.30" stroke="#808080" stroke-width="0.8" />
<line x1="74.00" y1="183.40" x2="85.30" y2="183.40" stroke="#707070" stroke-width="1.0" />
<line x1="74.30" y1="172.00" x2="74.30" y2="183.60" stroke="#a8a8a8" stroke-width="0.6" />
<line x1="85.00" y1="172.00" x2="85.00" y2="183.60" stroke="#9c9c9c" stroke-width="0.6" />
<rect x="89.50" y="172.00" width="11.30" height="11.50" fill="#fff" />
<line x1="89.50" y1="172.30" x2="100.80" y2="172.30" stroke="#808080" stroke-width="0.8" />
<line x1="89.50" y1="183.40" x2="100.80" y2="183.40" stroke="#707070" stroke-width="1.0" />
<line x1="89.80" y1="172.00" x2="89.80" y2="183.60" stroke="#a8a8a8" stroke-width="0.6" />
<line x1="100.50" y1="172.00" x2="100.50" y2="183.60" stroke="#9c9c9c" stroke-width="0.6" />
<rect x="104.90" y="172.00" width="11.30" height="11.50" fill="#fff" />
<line x1="104.90" y1="172.30" x2="116.20" y2="172.30" stroke="#808080" stroke-width="0.8" />
<line x1="104.90" y1="183.40" x2="116.20" y2="183.40" stroke="#707070" stroke-width="1.0" />
<line x1="105.20" y1="172.00" x2="105.20" y2="183.60" stroke="#a8a8a8" stroke-width="0.6" />
<line x1="115.90" y1="172.00" x2="115.90" y2="183.60" stroke="#9c9c9c" stroke-width="0.6" />
<rect x="120.80" y="172.00" width="11.30" height="11.50" fill="#fff" />
<line x1="120.80" y1="172.30" x2="132.10" y2="172.30" stroke="#808080" stroke-width="0.8" />
<line x1="120.80" y1="183.40" x2="132.10" y2="183.40" stroke="#707070" stroke-width="1.0" />
<line x1="121.10" y1="172.00" x2="121.10" y2="183.60" stroke="#a8a8a8" stroke-width="0.6" />
<line x1="131.80" y1="172.00" x2="131.80" y2="183.60" stroke="#9c9c9c" stroke-width="0.6" />
<rect x="135.50" y="171.30" width="12.90" height="13.30" fill="#fff" />
<rect x="136.30" y="172.30" width="11.20" height="11.40" fill="#fff" stroke="#a8a8a8" stroke-width="0.4" />
<line x1="136.30" y1="183.60" x2="147.50" y2="183.60" stroke="#8a8a8a" stroke-width="0.7" />
<line x1="13.20" y1="174.40" x2="20.90" y2="174.40" stroke="#333" stroke-width="0.8" />
<line x1="30.40" y1="174.40" x2="34.60" y2="174.40" stroke="#333" stroke-width="0.7" />
<circle cx="29.40" cy="176.40" r="0.45" fill="#333"/>
<circle cx="29.40" cy="179.50" r="0.45" fill="#333"/>
<circle cx="35.60" cy="176.40" r="0.35" fill="#ccc"/>
<circle cx="35.60" cy="179.50" r="0.35" fill="#ccc"/>
<circle cx="35.20" cy="181.00" r="0.35" fill="#ccc"/>
<circle cx="48.30" cy="175.40" r="0.45" fill="#555"/>
<circle cx="44.60" cy="178.40" r="0.45" fill="#555"/>
<circle cx="51.60" cy="178.40" r="0.45" fill="#555"/>
<circle cx="48.30" cy="180.40" r="0.45" fill="#555"/>
<path d="M45.8 177.2 L47.2 176 M49.6 176 L50.8 177.2 M45.8 179.4 L47 180.2 M50.8 179.4 L49.6 180.2" stroke="#999" stroke-width="0.4" fill="none" />
<circle cx="61.30" cy="175.40" r="0.4" fill="#aaa"/>
<circle cx="65.70" cy="175.40" r="0.4" fill="#aaa"/>
<circle cx="60.40" cy="178.00" r="0.4" fill="#aaa"/>
<circle cx="66.70" cy="177.60" r="0.4" fill="#aaa"/>
<path d="M61.5 180 L63.2 181.5 M66 179.5 L64.2 181.5" stroke="#ccc" stroke-width="0.4" fill="none" />
<circle cx="76.40" cy="176.50" r="0.55" fill="#111"/>
<circle cx="76.40" cy="179.20" r="0.55" fill="#111"/>
<circle cx="83.50" cy="177.40" r="0.55" fill="#111"/>
<circle cx="82.40" cy="179.60" r="0.55" fill="#111"/>
<circle cx="81.40" cy="181.40" r="0.55" fill="#111"/>
<circle cx="79.60" cy="173.60" r="0.55" fill="#111"/>
<path d="M77.2 174.8 Q79.6 172.6 82 174.6 L83.4 176.6 M76.8 180.5 Q78 182.4 80.5 182" stroke="#555" stroke-width="0.4" fill="none" />
<line x1="74.00" y1="172.40" x2="85.30" y2="172.40" stroke="#222" stroke-width="1.0" />
<line x1="74.00" y1="183.30" x2="85.30" y2="183.30" stroke="#111" stroke-width="1.1" />
<path d="M91.5 175.3 L93.5 177.4 L92 180.4 M94 179 L96 178.4" stroke="#666" stroke-width="0.5" fill="none" stroke-dasharray="0.9 0.5"/>
<path d="M98.4 174.5 L96.4 176.7" stroke="#777" stroke-width="0.45" fill="none" />
<line x1="98.50" y1="176.00" x2="98.50" y2="180.60" stroke="#555" stroke-width="0.6" />
<path d="M107 176.3 L107.9 177.7 L107 179.2 M115 176.3 L114.1 177.7 L115 179.2" stroke="#444" stroke-width="0.55" fill="none" />
<line x1="107.80" y1="177.70" x2="114.20" y2="177.70" stroke="#444" stroke-width="1.0" />
<line x1="122.70" y1="174.50" x2="122.70" y2="181.00" stroke="#c8c8c8" stroke-width="0.5" />
<line x1="123.50" y1="178.40" x2="129.80" y2="178.40" stroke="#bbb" stroke-width="0.5" />
<circle cx="130.40" cy="174.20" r="0.4" fill="#555"/>
<circle cx="130.40" cy="181.40" r="0.4" fill="#555"/>
<path d="M140 175.5 L138 179.2 L139.2 180.6 M140 175.5 Q141 174.4 143 175 L144.5 179.6" stroke="#555" stroke-width="0.5" fill="none" />
<circle cx="146.50" cy="180.60" r="0.35" fill="#999"/>
<rect x="11.10" y="187.40" width="11.40" height="12.00" fill="#fff" />
<rect x="26.75" y="187.40" width="11.40" height="12.00" fill="#fff" />
<rect x="41.65" y="187.65" width="12.60" height="11.90" fill="#fff" stroke="#efe410" stroke-width="1.3" />
<path d="M12.6 193.6 Q12.8 191.6 14.4 191.6 H20.4 V194" stroke="#555" stroke-width="0.55" fill="none" />
<line x1="22.50" y1="188.30" x2="22.50" y2="198.70" stroke="#888" stroke-width="0.6" />
<circle cx="12.30" cy="194.20" r="0.4" fill="#555"/>
<line x1="29.50" y1="190.40" x2="35.00" y2="190.40" stroke="#c8c8c8" stroke-width="0.5" />
<line x1="29.80" y1="196.70" x2="35.00" y2="196.70" stroke="#999" stroke-width="0.5" />
<circle cx="35.40" cy="190.50" r="0.5" fill="#222"/>
<circle cx="35.40" cy="196.50" r="0.5" fill="#222"/>
<circle cx="29.40" cy="192.40" r="0.5" fill="#222"/>
<circle cx="29.40" cy="194.60" r="0.5" fill="#222"/>
<circle cx="35.50" cy="192.50" r="0.35" fill="#ccc"/>
<circle cx="35.50" cy="194.50" r="0.35" fill="#ccc"/>
<path d="M44.6 192 V197" stroke="#445" stroke-width="0.7" fill="none" />
<path d="M52.2 191.7 V197" stroke="#445" stroke-width="1.0" fill="none" />
<line x1="44.60" y1="193.50" x2="52.40" y2="193.50" stroke="#3a3f55" stroke-width="1.0" />
<rect x="57.00" y="187.20" width="29.60" height="12.30" fill="#c3dff0" />
<text font-size="4.07" fill="#5d6d80" transform="translate(71.50,195.02) scale(0.86,1)" text-anchor="middle" >Thickness</text>
<rect x="10.00" y="201.00" width="145.30" height="156.00" fill="#a9d5e8" />
<rect x="10.00" y="201.00" width="145.30" height="3.40" fill="#b7dbec" />
<text font-size="4.28" fill="#222" x="12.30" y="206.40" textLength="14.20" lengthAdjust="spacingAndGlyphs" font-weight="bold" >Elements</text>
<line x1="27.50" y1="204.70" x2="155.00" y2="204.70" stroke="#cfe8f3" stroke-width="0.7" />
<rect x="13.30" y="209.60" width="3.60" height="3.80" fill="#fff" />
<text font-size="4.28" fill="#2a3a5a" x="19.00" y="213.20" textLength="18.00" lengthAdjust="spacingAndGlyphs" >Infeed value</text>
<rect x="11.80" y="216.00" width="141.90" height="141.00" fill="#f0f7fd" stroke="#a9b0b8" stroke-width="0.5" />
<path d="M16.3 221.2 L17.1 222.1 L18.6 220.0" stroke="#111" stroke-width="0.65" fill="none" />
<text font-size="4.28" fill="#7a8191" x="23.10" y="223.10" textLength="8.90" lengthAdjust="spacingAndGlyphs" >Name</text>
<rect x="51.00" y="218.60" width="16.50" height="5.00" fill="#fff" stroke="#9a9a9a" stroke-width="0.4" />
<text font-size="4.17" fill="#558" transform="translate(51.80,222.66) scale(0.86,1)" >web</text>
<text font-size="4.28" fill="#223" transform="translate(15.00,231.30) scale(0.86,1)" font-weight="bold" >p1</text>
<text font-size="4.17" fill="#99a" transform="translate(51.00,231.26) scale(0.86,1)" >X:</text>
<text font-size="4.17" fill="#334" transform="translate(58.60,231.26) scale(0.86,1)" >0</text>
<line x1="65.50" y1="227.50" x2="65.50" y2="232.00" stroke="#999" stroke-width="0.4" />
<text font-size="4.17" fill="#889" transform="translate(68.50,231.26) scale(0.86,1)" >Y:</text>
<line x1="75.50" y1="227.50" x2="75.50" y2="232.00" stroke="#aaa" stroke-width="0.4" />
<text font-size="4.17" fill="#aab" transform="translate(77.00,231.26) scale(0.86,1)" >0</text>
<text font-size="4.17" fill="#556" transform="translate(86.00,231.26) scale(0.86,1)" >N:</text>
<line x1="94.00" y1="227.50" x2="94.00" y2="232.00" stroke="#555" stroke-width="0.5" />
<text font-size="4.17" fill="#333" transform="translate(95.00,231.26) scale(0.86,1)" >65</text>
<line x1="101.50" y1="227.50" x2="101.50" y2="232.00" stroke="#bbb" stroke-width="0.4" />
<path d="M106 229.5 L106.8 230.4 L108.3 228.3" stroke="#111" stroke-width="0.65" fill="none" />
<text font-size="4.17" fill="#667" transform="translate(111.00,231.26) scale(0.86,1)" >Fix</text>
<text font-size="4.28" fill="#446" transform="translate(15.00,239.40) scale(0.86,1)" font-weight="bold" >p2</text>
<text font-size="4.17" fill="#99a" transform="translate(51.00,239.36) scale(0.86,1)" >X:</text>
<text font-size="4.17" fill="#aab" transform="translate(58.60,239.36) scale(0.86,1)" >37.87</text>
<text font-size="4.17" fill="#889" transform="translate(72.00,239.36) scale(0.86,1)" >Y:</text>
<line x1="78.50" y1="235.50" x2="78.50" y2="240.00" stroke="#bbb" stroke-width="0.4" />
<text font-size="4.17" fill="#bbc" transform="translate(80.00,239.36) scale(0.86,1)" >0</text>
<text font-size="4.17" fill="#667" transform="translate(88.50,239.36) scale(0.86,1)" >N:</text>
<text font-size="4.17" fill="#445" transform="translate(98.00,239.36) scale(0.86,1)" >65</text>
<line x1="104.00" y1="235.50" x2="104.00" y2="240.00" stroke="#aaa" stroke-width="0.4" />
<text font-size="4.28" fill="#46598a" x="14.80" y="247.90" textLength="25.00" lengthAdjust="spacingAndGlyphs" >Chamber width</text>
<rect x="51.00" y="243.60" width="16.50" height="5.00" fill="#fff" stroke="#9a9a9a" stroke-width="0.4" />
<text font-size="4.17" fill="#335" transform="translate(51.80,247.66) scale(0.86,1)" >84.65</text>
<text font-size="4.28" fill="#223" x="14.80" y="256.00" textLength="11.00" lengthAdjust="spacingAndGlyphs" font-weight="bold" >Length</text>
<text font-size="4.17" fill="#99a" transform="translate(51.00,255.96) scale(0.86,1)" >37.87</text>
<line x1="67.30" y1="252.00" x2="67.30" y2="256.80" stroke="#aaa" stroke-width="0.4" />
<text font-size="4.17" fill="#445" transform="translate(70.50,255.96) scale(0.86,1)" >Angle</text>
<line x1="89.50" y1="252.00" x2="89.50" y2="256.80" stroke="#999" stroke-width="0.4" />
<text font-size="4.17" fill="#aab" transform="translate(90.60,255.96) scale(0.86,1)" >0</text>
<text font-size="4.17" fill="#7a86a8" transform="translate(101.50,255.96) scale(0.86,1)" >Area</text>
<text font-size="4.17" fill="#c3c8d0" transform="translate(119.50,255.96) scale(0.86,1)" >1147.71</text>
<path d="M16.3 264.1 L17.1 265.0 L18.6 262.90000000000003" stroke="#111" stroke-width="0.65" fill="none" />
<text font-size="4.28" fill="#7a8191" x="23.10" y="266.00" textLength="8.90" lengthAdjust="spacingAndGlyphs" >Name</text>
<rect x="51.00" y="261.60" width="24.80" height="5.00" fill="#fff" stroke="#9a9a9a" stroke-width="0.4" />
<text font-size="4.17" fill="#553" transform="translate(51.80,265.66) scale(0.86,1)" >flange_bottom</text>
<text font-size="4.28" fill="#4a3a5a" x="14.80" y="274.10" textLength="17.20" lengthAdjust="spacingAndGlyphs" font-weight="bold" >Base point</text>
<rect x="51.00" y="270.00" width="24.80" height="5.00" fill="#fff" />
<text font-size="4.28" fill="#111" transform="translate(51.30,274.10) scale(0.86,1)" font-weight="bold" >p3000</text>
<text font-size="4.28" fill="#334" x="14.80" y="282.10" textLength="11.20" lengthAdjust="spacingAndGlyphs" >Height</text>
<rect x="51.00" y="278.00" width="25.40" height="5.20" fill="#fff" />
<line x1="51.00" y1="283.20" x2="76.40" y2="283.20" stroke="#c5c5c5" stroke-width="0.4" />
<text font-size="4.17" fill="#225" transform="translate(51.80,282.16) scale(0.86,1)" font-weight="bold" >35.5</text>
<rect x="78.50" y="277.80" width="12.80" height="5.40" fill="#d9d9d9" />
<line x1="78.50" y1="277.60" x2="78.50" y2="283.40" stroke="#666" stroke-width="0.6" />
<text font-size="3.85" fill="#444" transform="translate(84.60,281.75) scale(0.86,1)" text-anchor="middle" >fix</text>
<text font-size="4.28" fill="#7f93bd" x="14.80" y="290.50" textLength="12.10" lengthAdjust="spacingAndGlyphs" >Radius 1</text>
<rect x="51.00" y="286.40" width="25.00" height="5.00" fill="#fff" stroke="#9a9a9a" stroke-width="0.4" />
<text font-size="4.17" fill="#557" transform="translate(51.80,290.46) scale(0.86,1)" >15</text>
<text font-size="4.28" fill="#30406a" x="14.80" y="298.90" textLength="13.00" lengthAdjust="spacingAndGlyphs" >Radius 2</text>
<rect x="51.00" y="294.80" width="25.00" height="5.00" fill="#fff" stroke="#9a9a9a" stroke-width="0.4" />
<text font-size="4.17" fill="#224" transform="translate(51.80,298.86) scale(0.86,1)" >20</text>
<text font-size="4.28" fill="#30406a" x="14.80" y="307.20" textLength="9.50" lengthAdjust="spacingAndGlyphs" >Slope</text>
<rect x="51.00" y="303.00" width="25.00" height="5.00" fill="#fff" stroke="#9a9a9a" stroke-width="0.4" />
<text font-size="4.17" fill="#224" transform="translate(51.80,307.06) scale(0.86,1)" font-weight="bold" >6</text>
<rect x="16.60" y="312.00" width="3.50" height="3.80" fill="#fff" />
<text font-size="3.75" fill="#4a62a8" x="20.80" y="315.31" textLength="24.70" lengthAdjust="spacingAndGlyphs" >Use fixed slope</text>
<text font-size="4.28" fill="#30406a" x="14.80" y="323.50" textLength="9.50" lengthAdjust="spacingAndGlyphs" >Slope</text>
<rect x="51.00" y="319.40" width="25.00" height="5.00" fill="#fafcff" stroke="#bbb" stroke-width="0.4" />
<text font-size="4.17" fill="#b5bac5" transform="translate(52.00,323.46) scale(0.86,1)" >71.15</text>
<path d="M16.8 331.3 L17.6 332.2 L19.1 330.1" stroke="#111" stroke-width="0.65" fill="none" />
<text font-size="4.28" fill="#6b86c5" x="23.10" y="333.20" textLength="9.40" lengthAdjust="spacingAndGlyphs" >Name</text>
<rect x="51.00" y="329.00" width="19.00" height="5.00" fill="#fff" stroke="#9a9a9a" stroke-width="0.4" />
<text font-size="4.17" fill="#432" transform="translate(51.80,333.06) scale(0.86,1)" font-weight="bold" >flange_top</text>
<text font-size="4.28" fill="#2a3555" x="14.80" y="341.60" textLength="17.70" lengthAdjust="spacingAndGlyphs" >Base point</text>
<rect x="51.00" y="337.40" width="19.00" height="5.40" fill="#fff" stroke="#9a9a9a" stroke-width="0.4" />
<text font-size="4.17" fill="#536" transform="translate(51.80,341.66) scale(0.86,1)" >p3005</text>
<text font-size="4.28" fill="#223" x="14.80" y="350.20" textLength="11.20" lengthAdjust="spacingAndGlyphs" >Height</text>
<rect x="51.00" y="345.60" width="19.00" height="5.80" fill="#fff" stroke="#9a9a9a" stroke-width="0.4" />
<text font-size="4.17" fill="#225" transform="translate(51.80,350.06) scale(0.86,1)" font-weight="bold" >35.5</text>
<rect x="72.00" y="345.20" width="14.00" height="6.20" fill="#dcdcdc" />
<line x1="72.00" y1="351.40" x2="86.00" y2="351.40" stroke="#999" stroke-width="0.6" />
<text font-size="3.85" fill="#444" transform="translate(79.00,349.75) scale(0.86,1)" text-anchor="middle" >fix</text>
<text font-size="4.28" fill="#6a7cb0" x="14.80" y="357.70" textLength="12.10" lengthAdjust="spacingAndGlyphs" >Radius 1</text>
<rect x="51.00" y="354.00" width="19.00" height="3.00" fill="#fff" stroke="#9a9a9a" stroke-width="0.4" />
<text font-size="4.17" fill="#557" transform="translate(52.00,357.76) scale(0.86,1)" >15</text>
<rect x="10.00" y="357.00" width="680.00" height="10.00" fill="#bccfe9" />
<text font-size="5.56" fill="#111" transform="translate(17.30,364.95) scale(0.86,1)" font-weight="bold" text-anchor="middle" >3</text>
<g clip-path="url(#botclip)">
<circle cx="32.00" cy="363.00" r="7" fill="#1a9a3e"/>
<path d="M35.7 363 H29.4" stroke="#fff" stroke-width="2.0" fill="none" />
<path d="M31.7 359.6 L28.2 363 L31.7 366.4" stroke="#fff" stroke-width="1.9" fill="none" stroke-linejoin="miter"/>
<circle cx="46.60" cy="363.00" r="7" fill="#1a9a3e"/>
<path d="M42.9 363 H49.2" stroke="#fff" stroke-width="2.0" fill="none" />
<path d="M46.9 359.6 L50.4 363 L46.9 366.4" stroke="#fff" stroke-width="1.9" fill="none" stroke-linejoin="miter"/>
</g>
<rect x="61.30" y="359.20" width="18.00" height="7.80" fill="#3bb54a" />
<text font-size="4.17" fill="#d8f3da" transform="translate(70.30,364.76) scale(0.86,1)" text-anchor="middle" >Apply</text>
</g>
<rect x="417.20" y="140.80" width="4.00" height="328.00" fill="#0b75be" />
<g clip-path="url(#w2clip)">
<path d="M713.8 262 L715.5 197 Q716.4 177.5 733 177.5 H751 Q759 177.5 770.5 191.5 Q786 209 810 210.5 H838 Q851 209.7 868 198" stroke="#1a8a34" stroke-width="0.95" fill="none" />
<path d="M715.5 197 Q716.4 177.5 733 177.5 H751 Q759 177.5 770.5 191.5 L775 196" stroke="#1a8a34" stroke-width="0.95" fill="none" transform="translate(1647,0) scale(-1,1)"/>
<path d="M713.8 262 Q713 300 710.8 330 L709.6 384 Q710.5 401.5 727 401.5 H747.7 Q755 401 771 386 Q787 370 803 369.5 H845 Q855 370 868 377.5" stroke="#1a8a34" stroke-width="0.85" fill="none" />
<path d="M698.7 220.2 Q698.3 211.5 707 211.5 H731.8 Q736.5 211.5 739.4 214.4 L757.9 232.5 Q775 249.6 797 249.6 L800.2 250.5 H846.6 Q856 250 868 246.8" stroke="#f2101e" stroke-width="1.05" fill="none" />
<path d="M698.7 220.2 L703 250.5 L708.6 290 L711.4 329.5 L713.4 361 Q714.5 369 721.6 369 H747.7 Q758 369 762.8 358.3 Q772 335.5 800 329.8 L806.2 329.5 H841 Q853 330.2 868 337" stroke="#f2101e" stroke-width="1.05" fill="none" />
<line x1="722.50" y1="368.90" x2="746.80" y2="368.90" stroke="#f5a3a3" stroke-width="1.5" />
<circle cx="698.80" cy="220.30" r="1.3" fill="#0c0c0c"/>
<circle cx="706.80" cy="211.30" r="1.3" fill="#0c0c0c"/>
<circle cx="731.80" cy="211.40" r="1.3" fill="#0c0c0c"/>
<circle cx="739.40" cy="214.40" r="1.3" fill="#0c0c0c"/>
<circle cx="757.90" cy="232.50" r="1.3" fill="#0c0c0c"/>
<circle cx="800.20" cy="250.40" r="1.3" fill="#0c0c0c"/>
<circle cx="823.30" cy="250.40" r="1.3" fill="#0c0c0c"/>
<circle cx="846.60" cy="250.40" r="1.3" fill="#0c0c0c"/>
<circle cx="703.00" cy="250.50" r="1.3" fill="#0c0c0c"/>
<circle cx="708.60" cy="290.00" r="1.3" fill="#0c0c0c"/>
<circle cx="711.40" cy="329.50" r="1.3" fill="#0c0c0c"/>
<circle cx="713.50" cy="361.70" r="1.3" fill="#0c0c0c"/>
<circle cx="721.60" cy="368.90" r="1.3" fill="#0c0c0c"/>
<circle cx="747.70" cy="368.90" r="1.3" fill="#0c0c0c"/>
<circle cx="806.20" cy="329.40" r="1.3" fill="#0c0c0c"/>
<circle cx="823.20" cy="329.40" r="1.3" fill="#0c0c0c"/>
<circle cx="841.00" cy="329.40" r="1.3" fill="#0c0c0c"/>
<ellipse cx="762.8" cy="358.3" rx="1.1" ry="2" fill="#0c0c0c" transform="rotate(25 762.8 358.3)"/>
<line x1="823.50" y1="283.00" x2="823.50" y2="297.00" stroke="#111" stroke-width="0.9" />
<line x1="817.00" y1="290.00" x2="830.00" y2="290.00" stroke="#8f8f8f" stroke-width="1.0" />
</g>
<rect x="864.20" y="184.60" width="571.80" height="356.30" fill="#0b75be" />
<rect x="868.00" y="188.60" width="564.00" height="348.20" fill="#fff" />
<rect x="869.00" y="188.90" width="5.60" height="5.20" fill="#1f74d4" />
<text font-size="4.60" fill="#fff" x="871.80" y="193.21" font-weight="bold" text-anchor="middle" >M</text>
<line x1="1391.30" y1="191.30" x2="1394.30" y2="191.30" stroke="#555" stroke-width="0.6" />
<line x1="1410.60" y1="190.00" x2="1410.60" y2="192.80" stroke="#555" stroke-width="0.6" />
<path d="M1424.8 189.8 L1427 192.4 M1427 189.8 L1424.8 192.4" stroke="#555" stroke-width="0.5" fill="none" />
<rect x="868.00" y="197.60" width="29.60" height="21.60" fill="#ededed" />
<line x1="868.00" y1="219.50" x2="897.60" y2="219.50" stroke="#aaa" stroke-width="0.7" />
<rect x="868.00" y="219.90" width="29.60" height="20.80" fill="#ededed" />
<path d="M877.8 199.5 V208.7 H887.3" stroke="#111" stroke-width="1.0" fill="none" />
<path d="M879.3 206.2 L881.8 203 L883.6 204.8 L886.3 202.2" stroke="#555" stroke-width="0.45" fill="none" />
<path d="M879.5 207.3 H886.5" stroke="#999" stroke-width="0.3" fill="none" stroke-dasharray="0.6 1.2"/>
<text font-size="4.67" fill="#1e2850" transform="translate(882.40,216.24) scale(0.875,1)" text-anchor="middle" >Calibration</text>
<rect x="877.30" y="221.50" width="9.80" height="9.00" fill="none" stroke="#222" stroke-width="0.8" />
<line x1="877.30" y1="224.50" x2="887.10" y2="224.50" stroke="#222" stroke-width="0.7" />
<line x1="877.30" y1="227.50" x2="887.10" y2="227.50" stroke="#222" stroke-width="0.7" />
<text font-size="4.67" fill="#2a2030" transform="translate(882.40,238.04) scale(0.875,1)" text-anchor="middle" >Pass design</text>
<line x1="876.50" y1="244.20" x2="887.20" y2="244.20" stroke="#444" stroke-width="0.5" />
<line x1="876.50" y1="247.30" x2="887.20" y2="247.30" stroke="#444" stroke-width="0.5" />
<line x1="876.50" y1="250.80" x2="887.20" y2="250.80" stroke="#999" stroke-width="0.5" />
<line x1="883.00" y1="243.20" x2="883.00" y2="245.20" stroke="#222" stroke-width="0.7" />
<rect x="878.20" y="250.00" width="1.60" height="1.50" fill="#222" />
<text font-size="4.67" fill="#2a3a7a" transform="translate(882.00,259.94) scale(0.875,1)" text-anchor="middle" >Settings</text>
<rect x="897.80" y="197.60" width="171.60" height="321.00" fill="#eff6fc" />
<line x1="897.80" y1="197.40" x2="1069.40" y2="197.40" stroke="#c4c4c4" stroke-width="0.7" />
<line x1="1069.40" y1="197.60" x2="1069.40" y2="520.00" stroke="#d5d5d5" stroke-width="0.6" />
<rect x="1063.40" y="198.00" width="6.00" height="320.00" fill="#f3f6f9" />
<path d="M1065 200.8 L1066.3 199.6 L1067.6 200.8" stroke="#bbb" stroke-width="0.4" fill="none" />
<text font-size="4.90" fill="#10101a" transform="translate(901.80,206.32) scale(0.875,1)" font-weight="bold" >Graph parameters</text>
<text font-size="4.79" fill="#7f8fb5" transform="translate(903.80,221.28) scale(0.875,1)" >Line width</text>
<rect x="1041.60" y="217.00" width="15.40" height="5.20" fill="#fff" />
<line x1="1041.60" y1="217.00" x2="1041.60" y2="222.20" stroke="#666" stroke-width="0.5" />
<line x1="1041.60" y1="217.00" x2="1057.00" y2="217.00" stroke="#ddd" stroke-width="0.4" />
<text font-size="4.45" fill="#444" transform="translate(1049.30,221.16) scale(0.875,1)" text-anchor="middle" >3</text>
<text font-size="4.79" fill="#3a4878" transform="translate(903.80,231.18) scale(0.875,1)" >Minimum Y-value</text>
<rect x="1041.60" y="226.90" width="15.40" height="5.20" fill="#fff" />
<line x1="1041.60" y1="226.90" x2="1041.60" y2="232.10" stroke="#666" stroke-width="0.5" />
<line x1="1041.60" y1="226.90" x2="1057.00" y2="226.90" stroke="#ddd" stroke-width="0.4" />
<text font-size="4.45" fill="#444" transform="translate(1049.30,231.06) scale(0.875,1)" text-anchor="middle" >All</text>
<text font-size="4.79" fill="#3a4878" transform="translate(903.80,240.88) scale(0.875,1)" >Maximum Y-value</text>
<rect x="1041.60" y="236.60" width="15.40" height="5.20" fill="#fff" />
<line x1="1041.60" y1="236.60" x2="1041.60" y2="241.80" stroke="#666" stroke-width="0.5" />
<line x1="1041.60" y1="236.60" x2="1057.00" y2="236.60" stroke="#ddd" stroke-width="0.4" />
<text font-size="4.45" fill="#444" transform="translate(1049.30,240.76) scale(0.875,1)" text-anchor="middle" >2</text>
<text font-size="4.79" fill="#223" transform="translate(903.80,250.78) scale(0.875,1)" >Marker size</text>
<rect x="1041.60" y="246.50" width="15.40" height="5.20" fill="#fff" />
<line x1="1041.60" y1="246.50" x2="1041.60" y2="251.70" stroke="#666" stroke-width="0.5" />
<line x1="1041.60" y1="246.50" x2="1057.00" y2="246.50" stroke="#ddd" stroke-width="0.4" />
<text font-size="4.45" fill="#444" transform="translate(1049.30,250.66) scale(0.875,1)" text-anchor="middle" >12</text>
<text font-size="4.90" fill="#1a1a2a" transform="translate(901.80,265.72) scale(0.875,1)" font-weight="bold" >Graphs</text>
<rect x="898.60" y="270.00" width="164.40" height="248.20" fill="#f2f8fd" stroke="#c9cdd2" stroke-width="0.5" />
<rect x="901.00" y="392.60" width="160.00" height="2.60" fill="#fbfdff" />
<text font-size="4.90" fill="#1a1a2a" transform="translate(904.00,279.72) scale(0.875,1)" font-weight="bold" >Graph type</text>
<circle cx="911.80" cy="287.00" r="1.55" fill="#cfcfcf"/>
<text font-size="4.79" fill="#5a4030" transform="translate(916.60,288.98) scale(0.875,1)" >Thickness division, -</text>
<circle cx="911.80" cy="296.50" r="1.55" fill="#cfcfcf"/>
<text font-size="4.79" fill="#44587a" transform="translate(916.60,298.48) scale(0.875,1)" >Elongation</text>
<circle cx="911.80" cy="306.00" r="1.1" fill="#222"/>
<text font-size="4.79" fill="#2a3a5a" transform="translate(916.60,307.98) scale(0.875,1)" >Reduction %</text>
<text font-size="4.90" fill="#1a1a2a" transform="translate(904.00,317.02) scale(0.875,1)" font-weight="bold" >Element name</text>
<path d="M906 324.5 L906.9 325.5 L908.6 323.1" stroke="#111" stroke-width="0.75" fill="none" />
<text font-size="4.67" fill="#445" transform="translate(911.50,326.24) scale(0.875,1)" >web</text>
<path d="M906 335.5 L906.9 336.5 L908.6 334.1" stroke="#111" stroke-width="0.75" fill="none" />
<text font-size="4.67" fill="#5a3a2a" transform="translate(913.00,337.24) scale(0.875,1)" >flange_bottom</text>
<rect x="905.60" y="345.50" width="3.60" height="3.80" fill="#fff" />
<text font-size="4.67" fill="#5a4a4a" transform="translate(913.00,349.24) scale(0.875,1)" >flange_top</text>
<text font-size="4.90" fill="#1a1a2a" transform="translate(904.00,360.32) scale(0.875,1)" font-weight="bold" >Visibility</text>
<rect x="910.00" y="366.00" width="3.60" height="3.60" fill="#fafcfe" />
<text font-size="4.67" fill="#334" transform="translate(916.60,369.44) scale(0.875,1)" >Edge names</text>
<path d="M911 377.6 L911.9 378.6 L913.6 376.20000000000005" stroke="#111" stroke-width="0.75" fill="none" />
<text font-size="4.67" fill="#223" transform="translate(916.60,379.04) scale(0.875,1)" >Contact zone parameters</text>
<path d="M911 386.90000000000003 L911.9 387.90000000000003 L913.6 385.50000000000006" stroke="#111" stroke-width="0.75" fill="none" />
<text font-size="4.67" fill="#235" transform="translate(916.60,388.44) scale(0.875,1)" >Free zone parameters</text>
<text font-size="4.90" fill="#1a1a2a" transform="translate(904.00,403.02) scale(0.875,1)" font-weight="bold" >Graph type</text>
<circle cx="911.80" cy="410.30" r="1.55" fill="#cfcfcf"/>
<text font-size="4.79" fill="#5a4030" transform="translate(916.60,412.28) scale(0.875,1)" >Thickness division, -</text>
<circle cx="911.80" cy="419.80" r="1.1" fill="#222"/>
<text font-size="4.79" fill="#2a3a5a" transform="translate(916.60,421.78) scale(0.875,1)" >Elongation, -</text>
<circle cx="911.80" cy="429.30" r="1.55" fill="#cfcfcf"/>
<text font-size="4.79" fill="#2a3a5a" transform="translate(916.60,431.28) scale(0.875,1)" >Reduction, %</text>
<text font-size="4.90" fill="#1a1a2a" transform="translate(904.00,440.32) scale(0.875,1)" font-weight="bold" >Element name</text>
<path d="M906 447.8 L906.9 448.8 L908.6 446.40000000000003" stroke="#111" stroke-width="0.75" fill="none" />
<text font-size="4.67" fill="#445" transform="translate(911.50,449.54) scale(0.875,1)" >web</text>
<path d="M906 458.8 L906.9 459.8 L908.6 457.40000000000003" stroke="#111" stroke-width="0.75" fill="none" />
<text font-size="4.67" fill="#223" transform="translate(913.00,460.54) scale(0.875,1)" >flange_bottom</text>
<path d="M906 470.90000000000003 L906.9 471.90000000000003 L908.6 469.50000000000006" stroke="#111" stroke-width="0.75" fill="none" />
<text font-size="4.67" fill="#5a4a4a" transform="translate(913.00,472.54) scale(0.875,1)" >flange_top</text>
<text font-size="4.90" fill="#1a1a2a" transform="translate(904.00,483.62) scale(0.875,1)" font-weight="bold" >Visibility</text>
<rect x="910.00" y="489.30" width="3.60" height="3.60" fill="#fafcfe" />
<text font-size="4.67" fill="#334" transform="translate(916.60,492.74) scale(0.875,1)" >Edge names</text>
<path d="M911 500.90000000000003 L911.9 501.90000000000003 L913.6 499.50000000000006" stroke="#111" stroke-width="0.75" fill="none" />
<text font-size="4.67" fill="#223" transform="translate(916.60,502.34) scale(0.875,1)" >Contact zone parameters</text>
<path d="M911 510.20000000000005 L911.9 511.20000000000005 L913.6 508.80000000000007" stroke="#111" stroke-width="0.75" fill="none" />
<text font-size="4.67" fill="#235" transform="translate(916.60,511.74) scale(0.875,1)" >Free zone parameters</text>
<rect x="1063.40" y="513.00" width="6.00" height="5.00" fill="#f3f6f9" />
<path d="M1065 514.5 L1066.3 515.7 L1067.6 514.5" stroke="#ccc" stroke-width="0.4" fill="none" />
<line x1="1086.00" y1="214.05" x2="1427.00" y2="214.05" stroke="#f4f4f4" stroke-width="0.5" />
<text font-size="5.00" fill="#787878" x="1084.00" y="215.80" text-anchor="end" >50</text>
<line x1="1086.00" y1="234.20" x2="1427.00" y2="234.20" stroke="#f4f4f4" stroke-width="0.5" />
<text font-size="5.00" fill="#787878" x="1084.00" y="235.95" text-anchor="end" >40</text>
<line x1="1086.00" y1="254.35" x2="1427.00" y2="254.35" stroke="#f4f4f4" stroke-width="0.5" />
<text font-size="5.00" fill="#787878" x="1084.00" y="256.10" text-anchor="end" >30</text>
<line x1="1086.00" y1="274.50" x2="1427.00" y2="274.50" stroke="#f4f4f4" stroke-width="0.5" />
<text font-size="5.00" fill="#787878" x="1084.00" y="276.25" text-anchor="end" >20</text>
<line x1="1086.00" y1="294.65" x2="1427.00" y2="294.65" stroke="#f4f4f4" stroke-width="0.5" />
<text font-size="5.00" fill="#787878" x="1084.00" y="296.40" text-anchor="end" >10</text>
<line x1="1086.00" y1="314.80" x2="1427.00" y2="314.80" stroke="#f4f4f4" stroke-width="0.5" />
<text font-size="5.00" fill="#787878" x="1084.00" y="316.55" text-anchor="end" >0</text>
<line x1="1086.00" y1="334.95" x2="1427.00" y2="334.95" stroke="#f4f4f4" stroke-width="0.5" />
<text font-size="5.00" fill="#787878" x="1084.00" y="336.70" text-anchor="end" >-10</text>
<text font-size="5.00" fill="#787878" x="1100.00" y="353.95" text-anchor="middle" >1</text>
<text font-size="5.00" fill="#787878" x="1124.20" y="353.95" text-anchor="middle" >2</text>
<text font-size="5.00" fill="#787878" x="1148.40" y="353.95" text-anchor="middle" >3</text>
<text font-size="5.00" fill="#787878" x="1172.60" y="353.95" text-anchor="middle" >4</text>
<text font-size="5.00" fill="#787878" x="1196.80" y="353.95" text-anchor="middle" >5</text>
<text font-size="5.00" fill="#787878" x="1221.00" y="353.95" text-anchor="middle" >6</text>
<text font-size="5.00" fill="#787878" x="1245.20" y="353.95" text-anchor="middle" >7</text>
<text font-size="5.00" fill="#787878" x="1269.40" y="353.95" text-anchor="middle" >8</text>
<text font-size="5.00" fill="#787878" x="1293.60" y="353.95" text-anchor="middle" >9</text>
<text font-size="5.00" fill="#787878" x="1317.80" y="353.95" text-anchor="middle" >10</text>
<text font-size="5.00" fill="#787878" x="1342.00" y="353.95" text-anchor="middle" >11</text>
<text font-size="5.00" fill="#787878" x="1366.20" y="353.95" text-anchor="middle" >12</text>
<text font-size="5.00" fill="#787878" x="1390.40" y="353.95" text-anchor="middle" >13</text>
<text font-size="5.00" fill="#787878" x="1414.60" y="353.95" text-anchor="middle" >14</text>
<defs>
<clipPath id="c1R"><polygon points="1100.0,314.8 1100.0,312.6 1124.2,279.3 1148.4,214.0 1172.6,227.5 1221.0,232.0 1245.2,244.0 1293.6,255.6 1317.8,270.6 1366.2,270.3 1414.6,286.0 1414.6,314.8"/></clipPath>
<clipPath id="c1A"><polygon points="1100.0,314.8 1100.0,312.6 1124.2,280.6 1148.4,334.8 1172.6,241.3 1221.0,285.6 1245.2,281.0 1293.6,299.0 1317.8,265.0 1366.2,262.5 1414.6,278.4 1414.6,314.8"/></clipPath>
<clipPath id="c1B"><polygon points="1100.0,314.8 1100.0,312.6 1124.2,277.6 1148.4,290.0 1172.6,278.3 1221.0,270.5 1245.2,258.0 1293.6,241.6 1317.8,265.0 1366.2,262.5 1414.6,278.4 1414.6,314.8"/></clipPath>
</defs>
<polygon points="1100.0,314.8 1100.0,312.6 1124.2,279.3 1148.4,214.0 1172.6,227.5 1221.0,232.0 1245.2,244.0 1293.6,255.6 1317.8,270.6 1366.2,270.3 1414.6,286.0 1414.6,314.8" fill="#e9f0d9"/>
<polygon points="1100.0,314.8 1100.0,312.6 1124.2,280.6 1148.4,334.8 1172.6,241.3 1221.0,285.6 1245.2,281.0 1293.6,299.0 1317.8,265.0 1366.2,262.5 1414.6,278.4 1414.6,314.8" fill="#cfd7ed"/>
<polygon points="1100.0,314.8 1100.0,312.6 1124.2,277.6 1148.4,290.0 1172.6,278.3 1221.0,270.5 1245.2,258.0 1293.6,241.6 1317.8,265.0 1366.2,262.5 1414.6,278.4 1414.6,314.8" fill="#d0ebf3"/>
<polygon points="1100.0,314.8 1100.0,312.6 1124.2,277.6 1148.4,290.0 1172.6,278.3 1221.0,270.5 1245.2,258.0 1293.6,241.6 1317.8,265.0 1366.2,262.5 1414.6,278.4 1414.6,314.8" fill="#b4d4ee" clip-path="url(#c1A)"/>
<polygon points="1100.0,314.8 1100.0,312.6 1124.2,280.6 1148.4,334.8 1172.6,241.3 1221.0,285.6 1245.2,281.0 1293.6,299.0 1317.8,265.0 1366.2,262.5 1414.6,278.4 1414.6,314.8" fill="#c3cfd3" clip-path="url(#c1R)"/>
<polygon points="1100.0,314.8 1100.0,312.6 1124.2,277.6 1148.4,290.0 1172.6,278.3 1221.0,270.5 1245.2,258.0 1293.6,241.6 1317.8,265.0 1366.2,262.5 1414.6,278.4 1414.6,314.8" fill="#b6e1d2" clip-path="url(#c1R)"/>
<g clip-path="url(#c1R)">
<polygon points="1100.0,314.8 1100.0,312.6 1124.2,277.6 1148.4,290.0 1172.6,278.3 1221.0,270.5 1245.2,258.0 1293.6,241.6 1317.8,265.0 1366.2,262.5 1414.6,278.4 1414.6,314.8" fill="#9fcbd3" clip-path="url(#c1A)"/>
</g>
<line x1="1086.00" y1="234.20" x2="1427.00" y2="234.20" stroke="#000" stroke-width="0.5" opacity="0.035"/>
<line x1="1086.00" y1="254.35" x2="1427.00" y2="254.35" stroke="#000" stroke-width="0.5" opacity="0.035"/>
<line x1="1086.00" y1="274.50" x2="1427.00" y2="274.50" stroke="#000" stroke-width="0.5" opacity="0.035"/>
<line x1="1086.00" y1="294.65" x2="1427.00" y2="294.65" stroke="#000" stroke-width="0.5" opacity="0.035"/>
<polyline points="1100.0,312.6 1124.2,279.3 1148.4,214.0 1172.6,227.5 1221.0,232.0 1245.2,244.0 1293.6,255.6 1317.8,270.6 1366.2,270.3 1414.6,286.0" fill="none" stroke="#de1545" stroke-width="1.15" stroke-linejoin="round"/>
<polyline points="1100.0,312.6 1124.2,277.6 1148.4,290.0 1172.6,278.3 1221.0,270.5 1245.2,258.0 1293.6,241.6 1317.8,265.0 1366.2,262.5 1414.6,278.4" fill="none" stroke="#47239a" stroke-width="1.25" stroke-linejoin="round"/>
<polyline points="1100.0,312.6 1124.2,280.6 1148.4,334.8 1172.6,241.3 1221.0,285.6 1245.2,281.0 1293.6,299.0 1317.8,265.0 1366.2,262.5 1414.6,278.4" fill="none" stroke="#47239a" stroke-width="1.25" stroke-linejoin="round"/>
<circle cx="1100.00" cy="312.60" r="2.05" fill="#fff" stroke="#eaa5bd" stroke-width="0.5"/>
<circle cx="1124.20" cy="279.30" r="2.05" fill="#fff" stroke="#eaa5bd" stroke-width="0.5"/>
<circle cx="1148.40" cy="214.00" r="2.05" fill="#fff" stroke="#eaa5bd" stroke-width="0.5"/>
<circle cx="1172.60" cy="227.50" r="2.05" fill="#fff" stroke="#eaa5bd" stroke-width="0.5"/>
<circle cx="1221.00" cy="232.00" r="2.05" fill="#fff" stroke="#eaa5bd" stroke-width="0.5"/>
<circle cx="1245.20" cy="244.00" r="2.05" fill="#fff" stroke="#eaa5bd" stroke-width="0.5"/>
<circle cx="1293.60" cy="255.60" r="2.05" fill="#fff" stroke="#eaa5bd" stroke-width="0.5"/>
<circle cx="1317.80" cy="270.60" r="2.05" fill="#fff" stroke="#eaa5bd" stroke-width="0.5"/>
<circle cx="1366.20" cy="270.30" r="2.05" fill="#fff" stroke="#eaa5bd" stroke-width="0.5"/>
<circle cx="1414.60" cy="286.00" r="2.05" fill="#fff" stroke="#eaa5bd" stroke-width="0.5"/>
<circle cx="1100.00" cy="312.60" r="2.05" fill="#fff" stroke="#b9aadc" stroke-width="0.5"/>
<circle cx="1124.20" cy="277.60" r="2.05" fill="#fff" stroke="#b9aadc" stroke-width="0.5"/>
<circle cx="1148.40" cy="290.00" r="2.05" fill="#fff" stroke="#b9aadc" stroke-width="0.5"/>
<circle cx="1172.60" cy="278.30" r="2.05" fill="#fff" stroke="#b9aadc" stroke-width="0.5"/>
<circle cx="1221.00" cy="270.50" r="2.05" fill="#fff" stroke="#b9aadc" stroke-width="0.5"/>
<circle cx="1245.20" cy="258.00" r="2.05" fill="#fff" stroke="#b9aadc" stroke-width="0.5"/>
<circle cx="1293.60" cy="241.60" r="2.05" fill="#fff" stroke="#b9aadc" stroke-width="0.5"/>
<circle cx="1317.80" cy="265.00" r="2.05" fill="#fff" stroke="#b9aadc" stroke-width="0.5"/>
<circle cx="1366.20" cy="262.50" r="2.05" fill="#fff" stroke="#b9aadc" stroke-width="0.5"/>
<circle cx="1414.60" cy="278.40" r="2.05" fill="#fff" stroke="#b9aadc" stroke-width="0.5"/>
<circle cx="1100.00" cy="312.60" r="2.05" fill="#fff" stroke="#b9aadc" stroke-width="0.5"/>
<circle cx="1124.20" cy="280.60" r="2.05" fill="#fff" stroke="#b9aadc" stroke-width="0.5"/>
<circle cx="1148.40" cy="334.80" r="2.05" fill="#fff" stroke="#b9aadc" stroke-width="0.5"/>
<circle cx="1172.60" cy="241.30" r="2.05" fill="#fff" stroke="#b9aadc" stroke-width="0.5"/>
<circle cx="1221.00" cy="285.60" r="2.05" fill="#fff" stroke="#b9aadc" stroke-width="0.5"/>
<circle cx="1245.20" cy="281.00" r="2.05" fill="#fff" stroke="#b9aadc" stroke-width="0.5"/>
<circle cx="1293.60" cy="299.00" r="2.05" fill="#fff" stroke="#b9aadc" stroke-width="0.5"/>
<circle cx="1317.80" cy="265.00" r="2.05" fill="#fff" stroke="#b9aadc" stroke-width="0.5"/>
<circle cx="1366.20" cy="262.50" r="2.05" fill="#fff" stroke="#b9aadc" stroke-width="0.5"/>
<circle cx="1414.60" cy="278.40" r="2.05" fill="#fff" stroke="#b9aadc" stroke-width="0.5"/>
<line x1="1086.00" y1="369.70" x2="1427.00" y2="369.70" stroke="#f4f4f4" stroke-width="0.5" />
<text font-size="5.00" fill="#787878" x="1084.00" y="371.65" text-anchor="end" >2</text>
<line x1="1086.00" y1="392.56" x2="1427.00" y2="392.56" stroke="#f4f4f4" stroke-width="0.5" />
<text font-size="5.00" fill="#787878" x="1084.00" y="394.51" text-anchor="end" >1,8</text>
<line x1="1086.00" y1="415.42" x2="1427.00" y2="415.42" stroke="#f4f4f4" stroke-width="0.5" />
<text font-size="5.00" fill="#787878" x="1084.00" y="417.37" text-anchor="end" >1,6</text>
<line x1="1086.00" y1="438.28" x2="1427.00" y2="438.28" stroke="#f4f4f4" stroke-width="0.5" />
<text font-size="5.00" fill="#787878" x="1084.00" y="440.23" text-anchor="end" >1,4</text>
<line x1="1086.00" y1="461.14" x2="1427.00" y2="461.14" stroke="#f4f4f4" stroke-width="0.5" />
<text font-size="5.00" fill="#787878" x="1084.00" y="463.09" text-anchor="end" >1,2</text>
<line x1="1086.00" y1="484.00" x2="1427.00" y2="484.00" stroke="#f4f4f4" stroke-width="0.5" />
<text font-size="5.00" fill="#787878" x="1084.00" y="485.95" text-anchor="end" >1</text>
<line x1="1086.00" y1="507.30" x2="1427.00" y2="507.30" stroke="#f2f2f2" stroke-width="0.5" />
<text font-size="5.00" fill="#787878" x="1100.00" y="516.35" text-anchor="middle" >1</text>
<text font-size="5.00" fill="#787878" x="1124.20" y="516.35" text-anchor="middle" >2</text>
<text font-size="5.00" fill="#787878" x="1148.40" y="516.35" text-anchor="middle" >3</text>
<text font-size="5.00" fill="#787878" x="1172.60" y="516.35" text-anchor="middle" >4</text>
<text font-size="5.00" fill="#787878" x="1196.80" y="516.35" text-anchor="middle" >5</text>
<text font-size="5.00" fill="#787878" x="1221.00" y="516.35" text-anchor="middle" >6</text>
<text font-size="5.00" fill="#787878" x="1245.20" y="516.35" text-anchor="middle" >7</text>
<text font-size="5.00" fill="#787878" x="1269.40" y="516.35" text-anchor="middle" >8</text>
<text font-size="5.00" fill="#787878" x="1293.60" y="516.35" text-anchor="middle" >9</text>
<text font-size="5.00" fill="#787878" x="1317.80" y="516.35" text-anchor="middle" >10</text>
<text font-size="5.00" fill="#787878" x="1342.00" y="516.35" text-anchor="middle" >11</text>
<text font-size="5.00" fill="#787878" x="1366.20" y="516.35" text-anchor="middle" >12</text>
<text font-size="5.00" fill="#787878" x="1390.40" y="516.35" text-anchor="middle" >13</text>
<text font-size="5.00" fill="#787878" x="1414.60" y="516.35" text-anchor="middle" >14</text>
<defs>
<clipPath id="c2R"><polygon points="1100.0,507.2 1100.0,484.0 1124.2,462.2 1148.4,377.8 1172.6,403.8 1221.0,410.3 1245.2,414.4 1293.6,420.3 1317.8,445.3 1366.2,446.6 1414.6,463.4 1414.6,507.2"/></clipPath>
<clipPath id="c2A"><polygon points="1100.0,507.2 1100.0,484.0 1124.2,493.4 1148.4,493.0 1172.6,455.0 1221.0,478.0 1245.2,451.9 1293.6,459.4 1317.8,450.3 1366.2,454.7 1414.6,475.6 1414.6,507.2"/></clipPath>
<clipPath id="c2B"><polygon points="1100.0,507.2 1100.0,484.0 1124.2,493.8 1148.4,495.6 1172.6,468.0 1221.0,459.0 1245.2,463.8 1293.6,449.7 1317.8,454.4 1366.2,455.0 1414.6,475.6 1414.6,507.2"/></clipPath>
</defs>
<polygon points="1100.0,507.2 1100.0,484.0 1124.2,462.2 1148.4,377.8 1172.6,403.8 1221.0,410.3 1245.2,414.4 1293.6,420.3 1317.8,445.3 1366.2,446.6 1414.6,463.4 1414.6,507.2" fill="#e0e5ea"/>
<polygon points="1100.0,507.2 1100.0,484.0 1124.2,493.4 1148.4,493.0 1172.6,455.0 1221.0,478.0 1245.2,451.9 1293.6,459.4 1317.8,450.3 1366.2,454.7 1414.6,475.6 1414.6,507.2" fill="#b9d2ea"/>
<polygon points="1100.0,507.2 1100.0,484.0 1124.2,493.8 1148.4,495.6 1172.6,468.0 1221.0,459.0 1245.2,463.8 1293.6,449.7 1317.8,454.4 1366.2,455.0 1414.6,475.6 1414.6,507.2" fill="#e5c8c8"/>
<polygon points="1100.0,507.2 1100.0,484.0 1124.2,493.8 1148.4,495.6 1172.6,468.0 1221.0,459.0 1245.2,463.8 1293.6,449.7 1317.8,454.4 1366.2,455.0 1414.6,475.6 1414.6,507.2" fill="#c4b8c9" clip-path="url(#c2A)"/>
<polygon points="1100.0,507.2 1100.0,484.0 1124.2,493.4 1148.4,493.0 1172.6,455.0 1221.0,478.0 1245.2,451.9 1293.6,459.4 1317.8,450.3 1366.2,454.7 1414.6,475.6 1414.6,507.2" fill="#b9d2ea" clip-path="url(#c2R)"/>
<polygon points="1100.0,507.2 1100.0,484.0 1124.2,493.8 1148.4,495.6 1172.6,468.0 1221.0,459.0 1245.2,463.8 1293.6,449.7 1317.8,454.4 1366.2,455.0 1414.6,475.6 1414.6,507.2" fill="#e5c8c8" clip-path="url(#c2R)"/>
<g clip-path="url(#c2R)">
<polygon points="1100.0,507.2 1100.0,484.0 1124.2,493.8 1148.4,495.6 1172.6,468.0 1221.0,459.0 1245.2,463.8 1293.6,449.7 1317.8,454.4 1366.2,455.0 1414.6,475.6 1414.6,507.2" fill="#c4b8c9" clip-path="url(#c2A)"/>
</g>
<line x1="1086.00" y1="392.56" x2="1427.00" y2="392.56" stroke="#000" stroke-width="0.5" opacity="0.05"/>
<line x1="1086.00" y1="415.42" x2="1427.00" y2="415.42" stroke="#000" stroke-width="0.5" opacity="0.05"/>
<line x1="1086.00" y1="438.28" x2="1427.00" y2="438.28" stroke="#000" stroke-width="0.5" opacity="0.05"/>
<line x1="1086.00" y1="461.14" x2="1427.00" y2="461.14" stroke="#000" stroke-width="0.5" opacity="0.05"/>
<line x1="1086.00" y1="484.00" x2="1427.00" y2="484.00" stroke="#000" stroke-width="0.5" opacity="0.05"/>
<polyline points="1100.0,484.0 1124.2,462.2 1148.4,377.8 1172.6,403.8 1221.0,410.3 1245.2,414.4 1293.6,420.3 1317.8,445.3 1366.2,446.6 1414.6,463.4" fill="none" stroke="#de1545" stroke-width="1.15" stroke-linejoin="round"/>
<polyline points="1100.0,484.0 1124.2,493.4 1148.4,493.0 1172.6,455.0 1221.0,478.0 1245.2,451.9 1293.6,459.4 1317.8,450.3 1366.2,454.7 1414.6,475.6" fill="none" stroke="#4b1a8e" stroke-width="1.25" stroke-linejoin="round"/>
<polyline points="1100.0,484.0 1124.2,493.8 1148.4,495.6 1172.6,468.0 1221.0,459.0 1245.2,463.8 1293.6,449.7 1317.8,454.4 1366.2,455.0 1414.6,475.6" fill="none" stroke="#f5cf10" stroke-width="1.35" stroke-linejoin="round"/>
<circle cx="1100.00" cy="484.00" r="2.05" fill="#fff" stroke="#eaa5bd" stroke-width="0.5"/>
<circle cx="1124.20" cy="462.20" r="2.05" fill="#fff" stroke="#eaa5bd" stroke-width="0.5"/>
<circle cx="1148.40" cy="377.80" r="2.05" fill="#fff" stroke="#eaa5bd" stroke-width="0.5"/>
<circle cx="1172.60" cy="403.80" r="2.05" fill="#fff" stroke="#eaa5bd" stroke-width="0.5"/>
<circle cx="1221.00" cy="410.30" r="2.05" fill="#fff" stroke="#eaa5bd" stroke-width="0.5"/>
<circle cx="1245.20" cy="414.40" r="2.05" fill="#fff" stroke="#eaa5bd" stroke-width="0.5"/>
<circle cx="1293.60" cy="420.30" r="2.05" fill="#fff" stroke="#eaa5bd" stroke-width="0.5"/>
<circle cx="1317.80" cy="445.30" r="2.05" fill="#fff" stroke="#eaa5bd" stroke-width="0.5"/>
<circle cx="1366.20" cy="446.60" r="2.05" fill="#fff" stroke="#eaa5bd" stroke-width="0.5"/>
<circle cx="1414.60" cy="463.40" r="2.05" fill="#fff" stroke="#eaa5bd" stroke-width="0.5"/>
<circle cx="1100.00" cy="484.00" r="2.05" fill="#fff" stroke="#b9aadc" stroke-width="0.5"/>
<circle cx="1124.20" cy="493.40" r="2.05" fill="#fff" stroke="#b9aadc" stroke-width="0.5"/>
<circle cx="1148.40" cy="493.00" r="2.05" fill="#fff" stroke="#b9aadc" stroke-width="0.5"/>
<circle cx="1172.60" cy="455.00" r="2.05" fill="#fff" stroke="#b9aadc" stroke-width="0.5"/>
<circle cx="1221.00" cy="478.00" r="2.05" fill="#fff" stroke="#b9aadc" stroke-width="0.5"/>
<circle cx="1245.20" cy="451.90" r="2.05" fill="#fff" stroke="#b9aadc" stroke-width="0.5"/>
<circle cx="1293.60" cy="459.40" r="2.05" fill="#fff" stroke="#b9aadc" stroke-width="0.5"/>
<circle cx="1317.80" cy="450.30" r="2.05" fill="#fff" stroke="#b9aadc" stroke-width="0.5"/>
<circle cx="1366.20" cy="454.70" r="2.05" fill="#fff" stroke="#b9aadc" stroke-width="0.5"/>
<circle cx="1414.60" cy="475.60" r="2.05" fill="#fff" stroke="#b9aadc" stroke-width="0.5"/>
<circle cx="1100.00" cy="484.00" r="2.05" fill="#fff" stroke="#f3dc6a" stroke-width="0.5"/>
<circle cx="1124.20" cy="493.80" r="2.05" fill="#fff" stroke="#f3dc6a" stroke-width="0.5"/>
<circle cx="1148.40" cy="495.60" r="2.05" fill="#fff" stroke="#f3dc6a" stroke-width="0.5"/>
<circle cx="1172.60" cy="468.00" r="2.05" fill="#fff" stroke="#f3dc6a" stroke-width="0.5"/>
<circle cx="1221.00" cy="459.00" r="2.05" fill="#fff" stroke="#f3dc6a" stroke-width="0.5"/>
<circle cx="1245.20" cy="463.80" r="2.05" fill="#fff" stroke="#f3dc6a" stroke-width="0.5"/>
<circle cx="1293.60" cy="449.70" r="2.05" fill="#fff" stroke="#f3dc6a" stroke-width="0.5"/>
<circle cx="1317.80" cy="454.40" r="2.05" fill="#fff" stroke="#f3dc6a" stroke-width="0.5"/>
<circle cx="1366.20" cy="455.00" r="2.05" fill="#fff" stroke="#f3dc6a" stroke-width="0.5"/>
<circle cx="1414.60" cy="475.60" r="2.05" fill="#fff" stroke="#f3dc6a" stroke-width="0.5"/>
</svg>
</body></html>
